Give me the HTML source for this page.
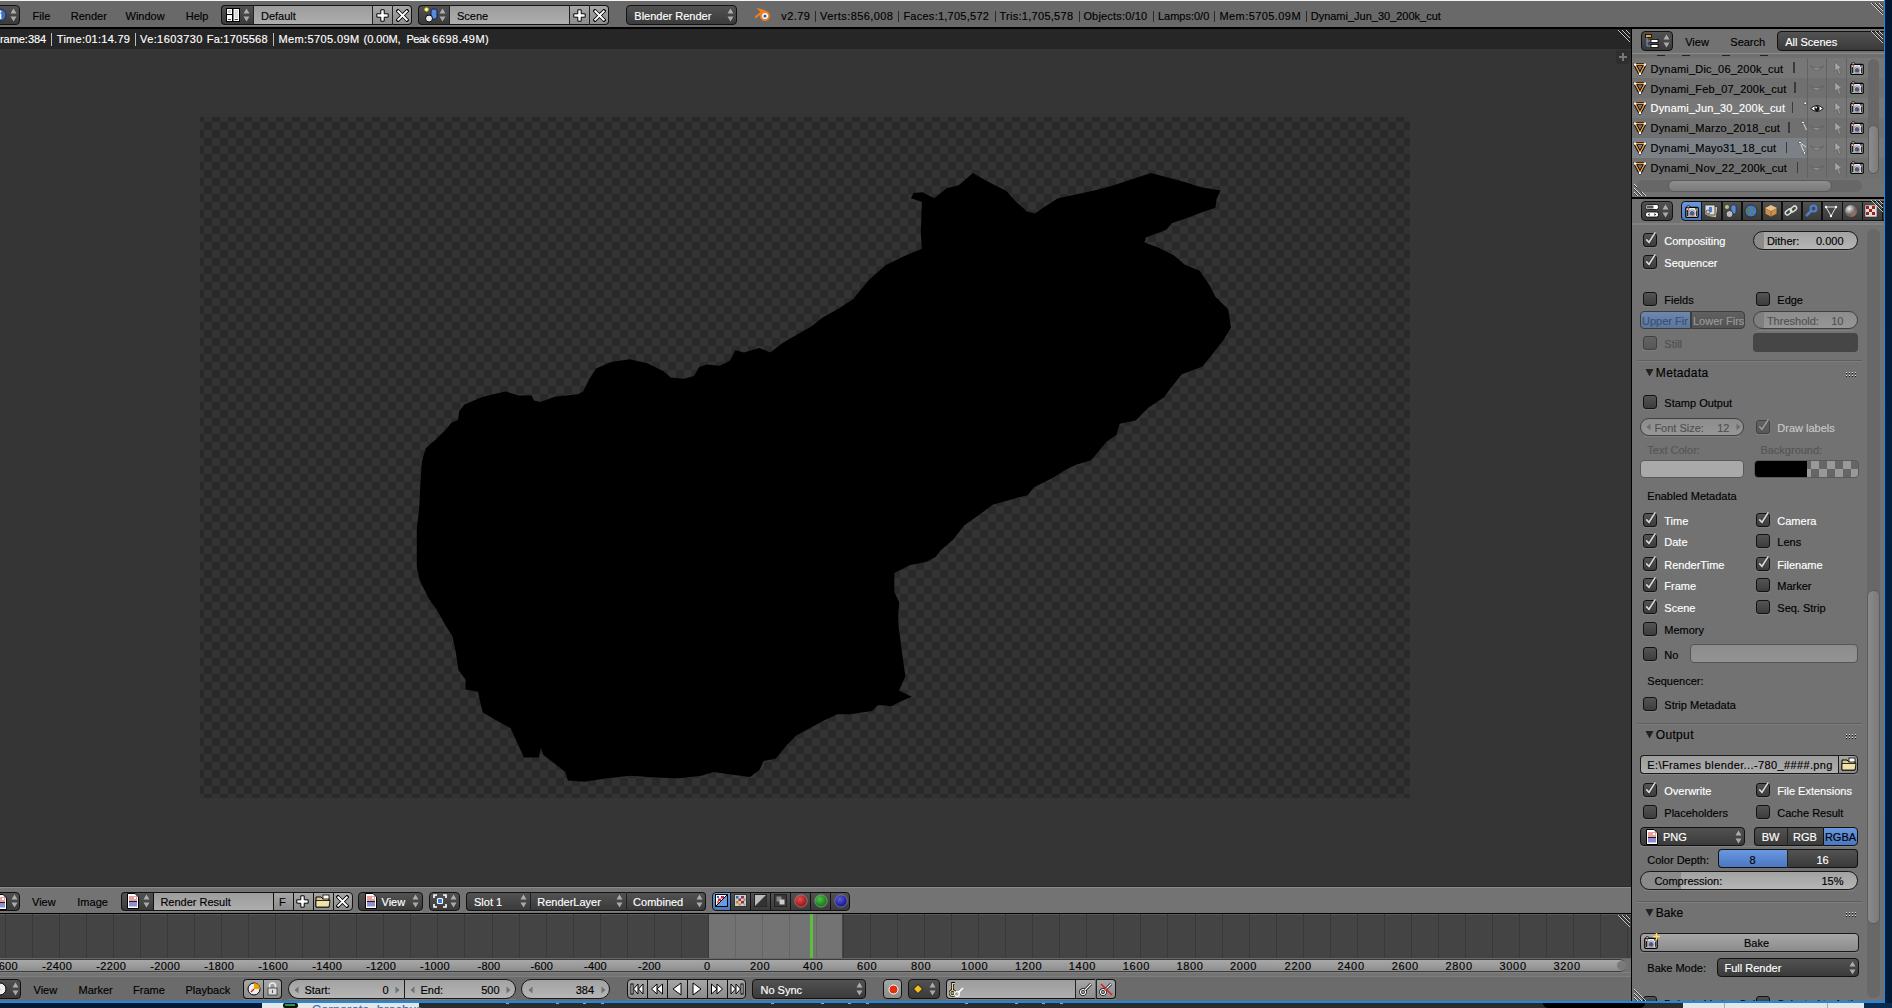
<!DOCTYPE html><html><head><meta charset="utf-8"><style>
html,body{margin:0;padding:0;width:1892px;height:1008px;overflow:hidden;background:#727272;}
body{position:relative;font-family:"Liberation Sans",sans-serif;}
div,span,svg{position:absolute;}
.t{white-space:pre;line-height:normal;-webkit-text-stroke:0.15px currentColor;}
</style></head><body>

<div style="left:0px;top:0px;width:1884px;height:27px;background:#696969"></div>
<div style="left:0px;top:0px;width:1892px;height:1px;background:#f4f4f4"></div>
<div style="left:0px;top:27px;width:1884px;height:1.5px;background:#000"></div>
<div style="left:0px;top:28.5px;width:1631px;height:0.5px;background:#3a3a3a"></div>
<svg style="left:1870px;top:1.5px" width="14" height="14" viewBox="0 0 14 14"><path d="M1 1 L13 13 M5 1 L13 9 M9 1 L13 5" stroke="#fff" stroke-width="1" opacity="0.75"/><path d="M2 1 L13 12 M6 1 L13 8 M10 1 L13 4" stroke="#000" stroke-width="1" opacity="0.55"/></svg>
<div style="left:-12px;top:5px;width:32px;height:20px;background:linear-gradient(#525252,#3a3a3a);border:1px solid #111;border-radius:4px;box-sizing:border-box;"></div>
<svg style="left:-6px;top:8px" width="14" height="14" viewBox="0 0 14 14"><circle cx="6" cy="7" r="6" fill="#3f6fb8" stroke="#1a2a50" stroke-width="1"/><rect x="4.7" y="5.5" width="2.6" height="5.5" fill="#fff"/><rect x="4.7" y="2.6" width="2.6" height="2" fill="#fff"/></svg>
<svg style="left:10px;top:8px" width="7" height="14" viewBox="0 0 7 14"><path d="M3.5 0.5 L6.5 5.5 L0.5 5.5Z M0.5 8.5 L6.5 8.5 L3.5 13.5Z" fill="rgba(255,255,255,0.55)"/></svg>
<span class="t" style="left:32.6px;top:10.04px;font-size:11px;color:#000;">File</span>
<span class="t" style="left:70.8px;top:10.04px;font-size:11px;color:#000;">Render</span>
<span class="t" style="left:125.5px;top:10.04px;font-size:11px;color:#000;">Window</span>
<span class="t" style="left:185.8px;top:10.04px;font-size:11px;color:#000;">Help</span>
<div style="left:221px;top:5px;width:32px;height:20px;background:linear-gradient(#525252,#3a3a3a);border:1px solid #111;border-right:none;border-radius:4px 0 0 4px;box-sizing:border-box"></div>
<svg style="left:226px;top:8px" width="14" height="14" viewBox="0 0 14 14"><rect x="0.5" y="0.5" width="6" height="6" fill="#fff" stroke="#000"/><rect x="0.5" y="6.5" width="6" height="7" fill="#fff" stroke="#000"/><rect x="7" y="0.5" width="6.5" height="13" fill="#fff" stroke="#000"/><rect x="2" y="2" width="3" height="3" fill="#ccc"/><rect x="8.5" y="2" width="3.5" height="8" fill="#ddd"/><rect x="2" y="11" width="3" height="1" fill="#444"/><rect x="8.5" y="11" width="3.5" height="1" fill="#444"/></svg>
<svg style="left:243px;top:8px" width="7" height="14" viewBox="0 0 7 14"><path d="M3.5 0.5 L6.5 5.5 L0.5 5.5Z M0.5 8.5 L6.5 8.5 L3.5 13.5Z" fill="rgba(255,255,255,0.55)"/></svg>
<div style="left:253px;top:5px;width:119px;height:20px;background:linear-gradient(#9c9c9c,#aeaeae);border:1px solid #111;border-left:1px solid #222;border-right:none;box-sizing:border-box"></div>
<span class="t" style="left:261px;top:9.54px;font-size:11px;color:#000;">Default</span>
<div style="left:372px;top:5px;width:20px;height:20px;background:linear-gradient(#a6a6a6,#8c8c8c);border:1px solid #111;border-left:1px solid #222;border-right:none;box-sizing:border-box"></div>
<svg style="left:375.5px;top:8.5px" width="13" height="13" viewBox="0 0 13 13"><path d="M4.8 0.8h3.4v4h4v3.4h-4v4h-3.4v-4h-4v-3.4h4z" fill="#fff" stroke="#000" stroke-width="1"/></svg>
<div style="left:392px;top:5px;width:20px;height:20px;background:linear-gradient(#a6a6a6,#8c8c8c);border:1px solid #111;border-left:1px solid #222;border-radius:0 4px 4px 0;box-sizing:border-box"></div>
<svg style="left:395.5px;top:8.5px" width="13" height="13" viewBox="0 0 13 13"><path d="M2 2 L11 11 M11 2 L2 11" stroke="#000" stroke-width="3.6" stroke-linecap="square"/><path d="M2.3 2.3 L10.7 10.7 M10.7 2.3 L2.3 10.7" stroke="#fff" stroke-width="2" stroke-linecap="square"/></svg>
<div style="left:221px;top:25px;width:191px;height:1px;background:rgba(255,255,255,0.12)"></div>
<div style="left:418px;top:5px;width:31px;height:20px;background:linear-gradient(#525252,#3a3a3a);border:1px solid #111;border-right:none;border-radius:4px 0 0 4px;box-sizing:border-box"></div>
<svg style="left:424px;top:7px" width="16" height="16" viewBox="0 0 16 16"><circle cx="2.5" cy="2.5" r="2" fill="#ffffa0" stroke="#a0a020" stroke-width="0.8"/><rect x="7" y="2" width="6" height="10" rx="2" fill="#5a8ad8" stroke="#10205a" stroke-width="1"/><circle cx="5" cy="11.5" r="3.5" fill="#e8e8e8" stroke="#000" stroke-width="1"/></svg>
<svg style="left:439px;top:8px" width="7" height="14" viewBox="0 0 7 14"><path d="M3.5 0.5 L6.5 5.5 L0.5 5.5Z M0.5 8.5 L6.5 8.5 L3.5 13.5Z" fill="rgba(255,255,255,0.55)"/></svg>
<div style="left:449px;top:5px;width:120px;height:20px;background:linear-gradient(#9c9c9c,#aeaeae);border:1px solid #111;border-left:1px solid #222;border-right:none;box-sizing:border-box"></div>
<span class="t" style="left:457px;top:9.54px;font-size:11px;color:#000;">Scene</span>
<div style="left:569px;top:5px;width:20px;height:20px;background:linear-gradient(#a6a6a6,#8c8c8c);border:1px solid #111;border-left:1px solid #222;border-right:none;box-sizing:border-box"></div>
<svg style="left:572.5px;top:8.5px" width="13" height="13" viewBox="0 0 13 13"><path d="M4.8 0.8h3.4v4h4v3.4h-4v4h-3.4v-4h-4v-3.4h4z" fill="#fff" stroke="#000" stroke-width="1"/></svg>
<div style="left:589px;top:5px;width:20px;height:20px;background:linear-gradient(#a6a6a6,#8c8c8c);border:1px solid #111;border-left:1px solid #222;border-radius:0 4px 4px 0;box-sizing:border-box"></div>
<svg style="left:592.5px;top:8.5px" width="13" height="13" viewBox="0 0 13 13"><path d="M2 2 L11 11 M11 2 L2 11" stroke="#000" stroke-width="3.6" stroke-linecap="square"/><path d="M2.3 2.3 L10.7 10.7 M10.7 2.3 L2.3 10.7" stroke="#fff" stroke-width="2" stroke-linecap="square"/></svg>
<div style="left:418px;top:25px;width:191px;height:1px;background:rgba(255,255,255,0.12)"></div>
<div style="left:626px;top:5px;width:111px;height:20px;background:linear-gradient(#525252,#3a3a3a);border:1px solid #111;border-radius:4px;box-sizing:border-box;"></div>
<span class="t" style="left:634.3px;top:9.54px;font-size:11px;color:#fff;">Blender Render</span>
<svg style="left:727px;top:8px" width="7" height="14" viewBox="0 0 7 14"><path d="M3.5 0.5 L6.5 5.5 L0.5 5.5Z M0.5 8.5 L6.5 8.5 L3.5 13.5Z" fill="rgba(255,255,255,0.55)"/></svg>
<svg style="left:755px;top:8px" width="16" height="14" viewBox="0 0 16 14"><path d="M1 9 L7 4 L5 2 L9 3 L12 5" stroke="#f08020" stroke-width="2.2" fill="none" stroke-linecap="round"/><circle cx="10" cy="8" r="5" fill="#f08020"/><circle cx="10" cy="8" r="3" fill="#fff"/><circle cx="10" cy="8" r="1.6" fill="#2060c0"/></svg>
<span class="t" style="left:781.2px;top:10.04px;font-size:11px;color:#000;letter-spacing:0.456px;">v2.79</span>
<span class="t" style="left:820.1px;top:10.04px;font-size:11px;color:#000;letter-spacing:0.408px;">Verts:856,008</span>
<span class="t" style="left:903.4px;top:10.04px;font-size:11px;color:#000;letter-spacing:0.256px;">Faces:1,705,572</span>
<span class="t" style="left:999.5px;top:10.04px;font-size:11px;color:#000;letter-spacing:0.277px;">Tris:1,705,578</span>
<span class="t" style="left:1083.4px;top:10.04px;font-size:11px;color:#000;letter-spacing:0.178px;">Objects:0/10</span>
<span class="t" style="left:1157.9px;top:10.04px;font-size:11px;color:#000;letter-spacing:0.003px;">Lamps:0/0</span>
<span class="t" style="left:1219.5px;top:10.04px;font-size:11px;color:#000;letter-spacing:0.422px;">Mem:5705.09M</span>
<span class="t" style="left:1310.7px;top:10.04px;font-size:11px;color:#000;letter-spacing:-0.003px;">Dynami_Jun_30_200k_cut</span>
<div style="left:815.4px;top:11px;width:1px;height:11px;background:#2a2a2a"></div>
<div style="left:898.4px;top:11px;width:1px;height:11px;background:#2a2a2a"></div>
<div style="left:994.5px;top:11px;width:1px;height:11px;background:#2a2a2a"></div>
<div style="left:1078.6px;top:11px;width:1px;height:11px;background:#2a2a2a"></div>
<div style="left:1152.8px;top:11px;width:1px;height:11px;background:#2a2a2a"></div>
<div style="left:1214.4px;top:11px;width:1px;height:11px;background:#2a2a2a"></div>
<div style="left:1305.6px;top:11px;width:1px;height:11px;background:#2a2a2a"></div>
<div style="left:0px;top:29px;width:1630.5px;height:858px;background:#353535"></div>
<div style="left:0px;top:29px;width:1631px;height:20px;background:#262626"></div>
<div style="left:200px;top:117px;width:1210px;height:681px;background:repeating-conic-gradient(#333333 0% 25%, #292929 0% 50%) 4px 5px/16px 16px"></div>
<svg style="left:0;top:0" width="1892" height="1008" viewBox="0 0 1892 1008"><path d="M911.0 198.2 L913.5 193.0 L922.6 192.3 L934.2 198.2 L947.0 187.9 L958.7 185.3 L972.9 172.9 L985.8 180.6 L1006.4 191.0 L1014.2 200.0 L1027.0 211.6 L1034.8 213.4 L1045.1 206.4 L1058.0 198.2 L1094.2 190.4 L1112.2 185.8 L1150.9 172.9 L1184.5 181.9 L1200.0 187.1 L1220.6 190.4 L1216.7 198.7 L1215.4 207.7 L1200.0 212.9 L1187.0 218.0 L1171.6 223.2 L1166.4 229.7 L1145.8 237.4 L1144.5 242.6 L1158.7 247.7 L1174.1 255.5 L1184.5 264.5 L1200.0 271.0 L1210.3 286.4 L1215.4 296.8 L1228.3 309.6 L1230.9 327.7 L1223.2 340.6 L1212.8 353.5 L1202.5 366.4 L1181.9 374.2 L1171.6 387.1 L1163.8 397.4 L1148.3 407.7 L1145.0 411.1 L1135.6 420.6 L1119.7 423.8 L1116.5 434.9 L1107.0 441.3 L1091.1 460.3 L1075.2 465.1 L1065.7 469.8 L1053.0 477.8 L1034.0 487.3 L1027.6 495.2 L1014.9 498.4 L992.7 504.8 L980.0 514.3 L964.1 525.4 L953.0 539.7 L940.3 550.8 L935.6 557.1 L926.0 561.9 L910.2 565.1 L894.3 573.0 L894.3 592.1 L899.0 601.6 L898.1 622.2 L902.2 654.0 L905.4 676.2 L899.0 690.5 L911.7 696.8 L900.6 701.6 L891.1 706.3 L878.4 704.8 L872.1 711.1 L849.8 714.3 L837.1 714.3 L823.0 721.0 L796.3 735.6 L786.6 745.3 L775.6 758.7 L763.5 761.1 L759.8 769.6 L750.1 777.0 L730.7 774.5 L713.6 772.1 L701.5 775.7 L679.6 778.2 L655.3 777.4 L631.0 775.7 L606.7 778.2 L584.8 781.8 L567.8 780.6 L565.3 772.1 L553.2 762.4 L543.4 755.0 L541.0 747.8 L538.6 757.5 L524.0 757.5 L510.6 728.3 L502.1 723.4 L482.7 712.5 L477.8 691.8 L465.6 689.4 L465.6 679.7 L458.4 670.0 L455.9 653.0 L452.3 635.9 L447.4 628.6 L436.5 609.2 L429.2 599.5 L419.5 580.0 L416.8 566.9 L416.8 528.2 L419.3 507.6 L420.6 479.2 L421.9 461.2 L425.8 448.3 L437.4 438.0 L446.4 429.0 L451.6 422.5 L458.0 420.0 L459.3 410.9 L464.5 404.5 L479.9 398.0 L487.7 395.4 L505.7 391.6 L518.6 395.4 L531.5 395.4 L534.1 400.6 L540.5 401.9 L554.7 396.7 L577.9 394.2 L583.1 391.6 L589.5 378.7 L596.0 368.4 L611.4 361.9 L629.5 359.3 L647.5 363.2 L663.0 370.9 L670.8 377.4 L683.7 378.7 L694.0 376.1 L699.1 367.1 L706.9 364.5 L719.8 365.8 L730.1 360.6 L735.3 350.2 L744.0 352.4 L759.3 348.0 L770.2 352.4 L783.3 342.6 L796.4 335.0 L811.7 326.2 L822.6 317.5 L840.1 307.7 L853.2 298.9 L868.4 280.4 L885.9 265.1 L903.4 256.4 L921.9 248.7 L920.8 232.4 L921.9 201.8Z" fill="#000"/></svg>
<span class="t" style="left:-6.8px;top:33.05px;font-size:11px;color:#fff;letter-spacing:-0.023px;">Frame:384</span>
<span class="t" style="left:56.8px;top:33.05px;font-size:11px;color:#fff;letter-spacing:0.268px;">Time:01:14.79</span>
<span class="t" style="left:140px;top:33.05px;font-size:11px;color:#fff;letter-spacing:0.407px;">Ve:1603730</span>
<span class="t" style="left:206.8px;top:33.05px;font-size:11px;color:#fff;letter-spacing:0.228px;">Fa:1705568</span>
<span class="t" style="left:278.4px;top:33.05px;font-size:11px;color:#fff;letter-spacing:0.405px;">Mem:5705.09M</span>
<span class="t" style="left:363.6px;top:33.05px;font-size:11px;color:#fff;letter-spacing:-0.042px;">(0.00M,</span>
<span class="t" style="left:406.6px;top:33.05px;font-size:11px;color:#fff;letter-spacing:-0.670px;">Peak</span>
<span class="t" style="left:432.3px;top:33.05px;font-size:11px;color:#fff;letter-spacing:0.478px;">6698.49M)</span>
<div style="left:51px;top:33px;width:1px;height:13px;background:#bbb"></div>
<div style="left:135px;top:33px;width:1px;height:13px;background:#bbb"></div>
<div style="left:273px;top:33px;width:1px;height:13px;background:#bbb"></div>
<svg style="left:1617px;top:29px" width="14" height="14" viewBox="0 0 14 14"><path d="M1 1 L13 13 M5 1 L13 9 M9 1 L13 5" stroke="#fff" stroke-width="1" opacity="0.75"/><path d="M2 1 L13 12 M6 1 L13 8 M10 1 L13 4" stroke="#000" stroke-width="1" opacity="0.55"/></svg>
<div style="left:1616px;top:50px;width:14px;height:14px;background:#2e2e2e;border-radius:3px"></div>
<svg style="left:1618px;top:52px" width="10" height="10" viewBox="0 0 10 10"><path d="M4 1h2v3h3v2h-3v3h-2v-3h-3v-2h3z" fill="#777"/></svg>
<div style="left:0px;top:886px;width:1631px;height:1px;background:#2a2a2a"></div>
<div style="left:0px;top:887px;width:1631px;height:26px;background:#737373"></div>
<div style="left:0px;top:887px;width:1631px;height:1px;background:#8c8c8c"></div>
<div style="left:0px;top:913px;width:1631px;height:1px;background:#000"></div>
<div style="left:-12px;top:891.5px;width:32px;height:19px;background:linear-gradient(#525252,#3a3a3a);border:1px solid #111;border-radius:4px;box-sizing:border-box;"></div>
<svg style="left:-6px;top:893.5px" width="14" height="16" viewBox="0 0 14 16"><path d="M1.5 0.5 H9 L12.5 4 V15.5 H1.5Z" fill="#fff" stroke="#000" stroke-width="1"/><rect x="3" y="3" width="8" height="5" fill="#e8a0a0"/><rect x="3" y="8" width="8" height="1.5" fill="#222"/><rect x="3" y="9.5" width="8" height="4" fill="#8f8fd8"/><rect x="8" y="4" width="2" height="2" fill="#fff"/></svg>
<svg style="left:11px;top:894.0px" width="7" height="14" viewBox="0 0 7 14"><path d="M3.5 0.5 L6.5 5.5 L0.5 5.5Z M0.5 8.5 L6.5 8.5 L3.5 13.5Z" fill="rgba(255,255,255,0.55)"/></svg>
<span class="t" style="left:32px;top:896.04px;font-size:11px;color:#000;">View</span>
<span class="t" style="left:77.3px;top:896.04px;font-size:11px;color:#000;">Image</span>
<div style="left:121.4px;top:891.5px;width:31.4px;height:19px;background:linear-gradient(#525252,#3a3a3a);border:1px solid #111;border-radius:4px 0 0 4px;box-sizing:border-box;border-right:none"></div>
<svg style="left:126px;top:893.0px" width="14" height="16" viewBox="0 0 14 16"><path d="M1.5 0.5 H9 L12.5 4 V15.5 H1.5Z" fill="#fff" stroke="#000" stroke-width="1"/><rect x="3" y="3" width="8" height="5" fill="#e8a0a0"/><rect x="3" y="8" width="8" height="1.5" fill="#222"/><rect x="3" y="9.5" width="8" height="4" fill="#8f8fd8"/><rect x="8" y="4" width="2" height="2" fill="#fff"/></svg>
<svg style="left:143px;top:894.0px" width="7" height="14" viewBox="0 0 7 14"><path d="M3.5 0.5 L6.5 5.5 L0.5 5.5Z M0.5 8.5 L6.5 8.5 L3.5 13.5Z" fill="rgba(255,255,255,0.55)"/></svg>
<div style="left:152.8px;top:891.5px;width:120px;height:19px;background:linear-gradient(#9c9c9c,#aeaeae);border:1px solid #111;border-radius:0;box-sizing:border-box;border-right:none"></div>
<span class="t" style="left:160.4px;top:896.04px;font-size:11px;color:#000;">Render Result</span>
<div style="left:272.7px;top:891.5px;width:20px;height:19px;background:linear-gradient(#a6a6a6,#8c8c8c);border:1px solid #111;border-radius:0;box-sizing:border-box;border-right:none"></div>
<span class="t" style="left:279px;top:896.04px;font-size:11px;color:#000;">F</span>
<div style="left:292.6px;top:891.5px;width:20px;height:19px;background:linear-gradient(#a6a6a6,#8c8c8c);border:1px solid #111;border-radius:0;box-sizing:border-box;border-right:none"></div>
<svg style="left:296px;top:894.5px" width="13" height="13" viewBox="0 0 13 13"><path d="M4.8 0.8h3.4v4h4v3.4h-4v4h-3.4v-4h-4v-3.4h4z" fill="#fff" stroke="#000" stroke-width="1"/></svg>
<div style="left:312.6px;top:891.5px;width:20px;height:19px;background:linear-gradient(#a6a6a6,#8c8c8c);border:1px solid #111;border-radius:0;box-sizing:border-box;border-right:none"></div>
<svg style="left:314.5px;top:894.0px" width="16" height="14" viewBox="0 0 16 14"><path d="M1 3 H6 L7.5 4.5 H14 V13 H1Z" fill="#d8c88a" stroke="#000" stroke-width="1"/><rect x="8" y="1" width="6" height="4" fill="#fff" stroke="#000" stroke-width="0.8"/><path d="M1 6.5 H15 L14 13 H1Z" fill="#efe2a8" stroke="#000" stroke-width="0.8"/></svg>
<div style="left:332.6px;top:891.5px;width:20px;height:19px;background:linear-gradient(#a6a6a6,#8c8c8c);border:1px solid #111;border-radius:0 4px 4px 0;box-sizing:border-box;"></div>
<svg style="left:336px;top:894.5px" width="13" height="13" viewBox="0 0 13 13"><path d="M2 2 L11 11 M11 2 L2 11" stroke="#000" stroke-width="3.6" stroke-linecap="square"/><path d="M2.3 2.3 L10.7 10.7 M10.7 2.3 L2.3 10.7" stroke="#fff" stroke-width="2" stroke-linecap="square"/></svg>
<div style="left:121.4px;top:910.5px;width:231.2px;height:1px;background:rgba(255,255,255,0.10)"></div>
<div style="left:358.3px;top:891.5px;width:65.2px;height:19px;background:linear-gradient(#525252,#3a3a3a);border:1px solid #111;border-radius:4px;box-sizing:border-box;"></div>
<svg style="left:364px;top:893.0px" width="14" height="16" viewBox="0 0 14 16"><path d="M1.5 0.5 H9 L12.5 4 V15.5 H1.5Z" fill="#fff" stroke="#000" stroke-width="1"/><rect x="3" y="3" width="8" height="5" fill="#e8a0a0"/><rect x="3" y="8" width="8" height="1.5" fill="#222"/><rect x="3" y="9.5" width="8" height="4" fill="#8f8fd8"/><rect x="8" y="4" width="2" height="2" fill="#fff"/></svg>
<span class="t" style="left:381.5px;top:896.04px;font-size:11px;color:#fff;">View</span>
<svg style="left:412px;top:894.0px" width="7" height="14" viewBox="0 0 7 14"><path d="M3.5 0.5 L6.5 5.5 L0.5 5.5Z M0.5 8.5 L6.5 8.5 L3.5 13.5Z" fill="rgba(255,255,255,0.55)"/></svg>
<div style="left:358.3px;top:910.5px;width:65.2px;height:1px;background:rgba(255,255,255,0.10)"></div>
<div style="left:429.3px;top:891.5px;width:31.2px;height:19px;background:linear-gradient(#525252,#3a3a3a);border:1px solid #111;border-radius:4px;box-sizing:border-box;"></div>
<svg style="left:433px;top:894.0px" width="14" height="14" viewBox="0 0 14 14"><path d="M1 4V1H4 M10 1H13V4 M13 10V13H10 M4 13H1V10" stroke="#fff" stroke-width="1.6" fill="none"/><rect x="4.5" y="4.5" width="5" height="5" rx="1" fill="#3070e0" stroke="#fff" stroke-width="1.2"/></svg>
<svg style="left:450px;top:894.0px" width="7" height="14" viewBox="0 0 7 14"><path d="M3.5 0.5 L6.5 5.5 L0.5 5.5Z M0.5 8.5 L6.5 8.5 L3.5 13.5Z" fill="rgba(255,255,255,0.55)"/></svg>
<div style="left:429.3px;top:910.5px;width:31.2px;height:1px;background:rgba(255,255,255,0.10)"></div>
<div style="left:465.8px;top:891.5px;width:64px;height:19px;background:linear-gradient(#525252,#3a3a3a);border:1px solid #111;border-radius:4px 0 0 4px;box-sizing:border-box;border-right:none"></div>
<span class="t" style="left:474px;top:896.04px;font-size:11px;color:#fff;">Slot 1</span>
<svg style="left:520px;top:894.0px" width="7" height="14" viewBox="0 0 7 14"><path d="M3.5 0.5 L6.5 5.5 L0.5 5.5Z M0.5 8.5 L6.5 8.5 L3.5 13.5Z" fill="rgba(255,255,255,0.55)"/></svg>
<div style="left:529.8px;top:891.5px;width:96px;height:19px;background:linear-gradient(#525252,#3a3a3a);border:1px solid #111;border-radius:0;box-sizing:border-box;border-right:none;border-left:1px solid #222"></div>
<span class="t" style="left:537.3px;top:896.04px;font-size:11px;color:#fff;">RenderLayer</span>
<svg style="left:616px;top:894.0px" width="7" height="14" viewBox="0 0 7 14"><path d="M3.5 0.5 L6.5 5.5 L0.5 5.5Z M0.5 8.5 L6.5 8.5 L3.5 13.5Z" fill="rgba(255,255,255,0.55)"/></svg>
<div style="left:625.7px;top:891.5px;width:80.2px;height:19px;background:linear-gradient(#525252,#3a3a3a);border:1px solid #111;border-radius:0 4px 4px 0;box-sizing:border-box;border-left:1px solid #222"></div>
<span class="t" style="left:633.1px;top:896.04px;font-size:11px;color:#fff;">Combined</span>
<svg style="left:696px;top:894.0px" width="7" height="14" viewBox="0 0 7 14"><path d="M3.5 0.5 L6.5 5.5 L0.5 5.5Z M0.5 8.5 L6.5 8.5 L3.5 13.5Z" fill="rgba(255,255,255,0.55)"/></svg>
<div style="left:465.8px;top:910.5px;width:240.1px;height:1px;background:rgba(255,255,255,0.10)"></div>
<div style="left:711.8px;top:891.5px;width:19.600000000000023px;height:19px;background:linear-gradient(#6a98e0,#4a78c0);border:1px solid #111;border-radius:4px 0 0 4px;box-sizing:border-box;"></div>
<div style="left:730.4px;top:891.5px;width:20.899999999999977px;height:19px;background:linear-gradient(#525252,#3a3a3a);border:1px solid #111;border-radius:0;box-sizing:border-box;"></div>
<div style="left:750.3px;top:891.5px;width:20.90000000000009px;height:19px;background:linear-gradient(#525252,#3a3a3a);border:1px solid #111;border-radius:0;box-sizing:border-box;"></div>
<div style="left:770.2px;top:891.5px;width:20.899999999999977px;height:19px;background:linear-gradient(#525252,#3a3a3a);border:1px solid #111;border-radius:0;box-sizing:border-box;"></div>
<div style="left:790.1px;top:891.5px;width:21.299999999999955px;height:19px;background:linear-gradient(#525252,#3a3a3a);border:1px solid #111;border-radius:0;box-sizing:border-box;"></div>
<div style="left:810.4px;top:891.5px;width:20.800000000000068px;height:19px;background:linear-gradient(#525252,#3a3a3a);border:1px solid #111;border-radius:0;box-sizing:border-box;"></div>
<div style="left:830.2px;top:891.5px;width:20.299999999999955px;height:19px;background:linear-gradient(#525252,#3a3a3a);border:1px solid #111;border-radius:0 4px 4px 0;box-sizing:border-box;"></div>
<div style="left:711.8px;top:910.5px;width:138.7px;height:1px;background:rgba(255,255,255,0.10)"></div>
<svg style="left:715px;top:894.0px" width="13" height="13" viewBox="0 0 13 13"><rect x="0.5" y="0.5" width="12" height="12" fill="#fff" stroke="#000"/><rect x="6" y="2" width="3" height="2.5" fill="#d02040"/><rect x="3" y="4.5" width="3" height="2.5" fill="#d02040"/><rect x="2" y="2" width="2" height="2" fill="#2070b0"/><rect x="2" y="7" width="2" height="2.5" fill="#e08020"/><path d="M12.5 0.5 L0.5 12.5 L12.5 12.5Z" fill="#6a9ae0" stroke="#000"/></svg>
<svg style="left:734px;top:894.0px" width="13" height="13" viewBox="0 0 13 13"><rect x="0.5" y="0.5" width="12" height="12" fill="#ccc" stroke="#333"/><rect x="2" y="2" width="2.5" height="2.5" fill="#2070a0"/><rect x="7" y="2" width="3" height="2.5" fill="#a03040"/><rect x="4.5" y="4.5" width="2.5" height="2.5" fill="#a03040"/><rect x="2" y="7" width="2.5" height="2.5" fill="#d08020"/><rect x="7" y="7" width="3" height="2.5" fill="#a03040"/><rect x="9.5" y="4.5" width="2" height="2.5" fill="#70a090"/><rect x="4.5" y="9.5" width="2.5" height="2" fill="#b09070"/><rect x="9.5" y="9.5" width="2" height="2" fill="#a0b060"/></svg>
<svg style="left:753.5px;top:894.0px" width="13" height="13" viewBox="0 0 13 13"><rect x="0.5" y="0.5" width="12" height="12" fill="#bbb" stroke="#222"/><path d="M12.5 0.5 L0.5 12.5 L12.5 12.5Z" fill="#333"/></svg>
<svg style="left:773.5px;top:894.0px" width="13" height="13" viewBox="0 0 13 13"><rect x="0.5" y="0.5" width="12" height="12" fill="#3a3a3a" stroke="#222"/><rect x="2.5" y="2.5" width="5" height="5" fill="#888"/><rect x="5.5" y="5.5" width="5" height="5" fill="#ccc"/></svg>
<svg style="left:793.5px;top:894.0px" width="14" height="14" viewBox="0 0 14 14"><defs><radialGradient id="g0" cx="40%" cy="35%"><stop offset="0" stop-color="#e05050"/><stop offset="1" stop-color="#a02020"/></radialGradient></defs><circle cx="7" cy="7" r="6.2" fill="url(#g0)" stroke="rgba(255,255,255,0.35)" stroke-width="0.8"/></svg>
<svg style="left:813.7px;top:894.0px" width="14" height="14" viewBox="0 0 14 14"><defs><radialGradient id="g1" cx="40%" cy="35%"><stop offset="0" stop-color="#50c050"/><stop offset="1" stop-color="#208020"/></radialGradient></defs><circle cx="7" cy="7" r="6.2" fill="url(#g1)" stroke="rgba(255,255,255,0.35)" stroke-width="0.8"/></svg>
<svg style="left:833.5px;top:894.0px" width="14" height="14" viewBox="0 0 14 14"><defs><radialGradient id="g2" cx="40%" cy="35%"><stop offset="0" stop-color="#6060d0"/><stop offset="1" stop-color="#2020a0"/></radialGradient></defs><circle cx="7" cy="7" r="6.2" fill="url(#g2)" stroke="rgba(255,255,255,0.35)" stroke-width="0.8"/></svg>
<div style="left:0px;top:914px;width:1631px;height:1px;background:#5a5a5a"></div>
<div style="left:0px;top:915px;width:1631px;height:43px;background:#444444"></div>
<div style="left:707.9px;top:914px;width:134.4px;height:44px;background:#737373"></div>
<div style="left:4.8px;top:914px;width:1px;height:44px;background:#393939"></div>
<div style="left:31.8px;top:914px;width:1px;height:44px;background:#393939"></div>
<div style="left:58.9px;top:914px;width:1px;height:44px;background:#393939"></div>
<div style="left:85.9px;top:914px;width:1px;height:44px;background:#393939"></div>
<div style="left:113.0px;top:914px;width:1px;height:44px;background:#393939"></div>
<div style="left:140.0px;top:914px;width:1px;height:44px;background:#393939"></div>
<div style="left:167.0px;top:914px;width:1px;height:44px;background:#393939"></div>
<div style="left:194.1px;top:914px;width:1px;height:44px;background:#393939"></div>
<div style="left:221.1px;top:914px;width:1px;height:44px;background:#393939"></div>
<div style="left:248.1px;top:914px;width:1px;height:44px;background:#393939"></div>
<div style="left:275.2px;top:914px;width:1px;height:44px;background:#393939"></div>
<div style="left:302.2px;top:914px;width:1px;height:44px;background:#393939"></div>
<div style="left:329.3px;top:914px;width:1px;height:44px;background:#393939"></div>
<div style="left:356.3px;top:914px;width:1px;height:44px;background:#393939"></div>
<div style="left:383.3px;top:914px;width:1px;height:44px;background:#393939"></div>
<div style="left:410.4px;top:914px;width:1px;height:44px;background:#393939"></div>
<div style="left:437.4px;top:914px;width:1px;height:44px;background:#393939"></div>
<div style="left:464.4px;top:914px;width:1px;height:44px;background:#393939"></div>
<div style="left:491.5px;top:914px;width:1px;height:44px;background:#393939"></div>
<div style="left:518.5px;top:914px;width:1px;height:44px;background:#393939"></div>
<div style="left:545.6px;top:914px;width:1px;height:44px;background:#393939"></div>
<div style="left:572.6px;top:914px;width:1px;height:44px;background:#393939"></div>
<div style="left:599.6px;top:914px;width:1px;height:44px;background:#393939"></div>
<div style="left:626.7px;top:914px;width:1px;height:44px;background:#393939"></div>
<div style="left:653.7px;top:914px;width:1px;height:44px;background:#393939"></div>
<div style="left:680.8px;top:914px;width:1px;height:44px;background:#393939"></div>
<div style="left:707.8px;top:914px;width:1px;height:44px;background:#393939"></div>
<div style="left:734.8px;top:914px;width:1px;height:44px;background:#666666"></div>
<div style="left:761.9px;top:914px;width:1px;height:44px;background:#666666"></div>
<div style="left:788.9px;top:914px;width:1px;height:44px;background:#666666"></div>
<div style="left:815.9px;top:914px;width:1px;height:44px;background:#666666"></div>
<div style="left:843.0px;top:914px;width:1px;height:44px;background:#393939"></div>
<div style="left:870.0px;top:914px;width:1px;height:44px;background:#393939"></div>
<div style="left:897.1px;top:914px;width:1px;height:44px;background:#393939"></div>
<div style="left:924.1px;top:914px;width:1px;height:44px;background:#393939"></div>
<div style="left:951.1px;top:914px;width:1px;height:44px;background:#393939"></div>
<div style="left:978.2px;top:914px;width:1px;height:44px;background:#393939"></div>
<div style="left:1005.2px;top:914px;width:1px;height:44px;background:#393939"></div>
<div style="left:1032.2px;top:914px;width:1px;height:44px;background:#393939"></div>
<div style="left:1059.3px;top:914px;width:1px;height:44px;background:#393939"></div>
<div style="left:1086.3px;top:914px;width:1px;height:44px;background:#393939"></div>
<div style="left:1113.4px;top:914px;width:1px;height:44px;background:#393939"></div>
<div style="left:1140.4px;top:914px;width:1px;height:44px;background:#393939"></div>
<div style="left:1167.4px;top:914px;width:1px;height:44px;background:#393939"></div>
<div style="left:1194.5px;top:914px;width:1px;height:44px;background:#393939"></div>
<div style="left:1221.5px;top:914px;width:1px;height:44px;background:#393939"></div>
<div style="left:1248.5px;top:914px;width:1px;height:44px;background:#393939"></div>
<div style="left:1275.6px;top:914px;width:1px;height:44px;background:#393939"></div>
<div style="left:1302.6px;top:914px;width:1px;height:44px;background:#393939"></div>
<div style="left:1329.7px;top:914px;width:1px;height:44px;background:#393939"></div>
<div style="left:1356.7px;top:914px;width:1px;height:44px;background:#393939"></div>
<div style="left:1383.7px;top:914px;width:1px;height:44px;background:#393939"></div>
<div style="left:1410.8px;top:914px;width:1px;height:44px;background:#393939"></div>
<div style="left:1437.8px;top:914px;width:1px;height:44px;background:#393939"></div>
<div style="left:1464.9px;top:914px;width:1px;height:44px;background:#393939"></div>
<div style="left:1491.9px;top:914px;width:1px;height:44px;background:#393939"></div>
<div style="left:1518.9px;top:914px;width:1px;height:44px;background:#393939"></div>
<div style="left:1546.0px;top:914px;width:1px;height:44px;background:#393939"></div>
<div style="left:1573.0px;top:914px;width:1px;height:44px;background:#393939"></div>
<div style="left:1600.0px;top:914px;width:1px;height:44px;background:#393939"></div>
<div style="left:1627.1px;top:914px;width:1px;height:44px;background:#393939"></div>
<div style="left:810px;top:914px;width:3px;height:44px;background:#5bc03c"></div>
<svg style="left:1617px;top:914px" width="14" height="14" viewBox="0 0 14 14"><path d="M1 1 L13 13 M5 1 L13 9 M9 1 L13 5" stroke="#fff" stroke-width="1" opacity="0.75"/><path d="M2 1 L13 12 M6 1 L13 8 M10 1 L13 4" stroke="#000" stroke-width="1" opacity="0.5"/></svg>
<div style="left:0px;top:958px;width:1631px;height:1px;background:#666"></div>
<div style="left:0px;top:959px;width:1626px;height:13px;background:linear-gradient(#a8a8a8,#8e8e8e);border-top:1px solid #3c3c3c;border-bottom:1px solid #3c3c3c;border-radius:0 7px 7px 0;box-sizing:border-box"></div>
<div style="left:1617px;top:961px;width:9px;height:9px;background:#7a7a7a;border-radius:50%"></div>
<span class="t" style="left:-11.9px;top:959.84px;font-size:11px;color:#000;letter-spacing:0.372px;">-2600</span>
<span class="t" style="left:42.3px;top:959.84px;font-size:11px;color:#000;letter-spacing:0.372px;">-2400</span>
<span class="t" style="left:96.3px;top:959.84px;font-size:11px;color:#000;letter-spacing:0.372px;">-2200</span>
<span class="t" style="left:150.3px;top:959.84px;font-size:11px;color:#000;letter-spacing:0.372px;">-2000</span>
<span class="t" style="left:204.2px;top:959.84px;font-size:11px;color:#000;letter-spacing:0.372px;">-1800</span>
<span class="t" style="left:258.2px;top:959.84px;font-size:11px;color:#000;letter-spacing:0.372px;">-1600</span>
<span class="t" style="left:312.2px;top:959.84px;font-size:11px;color:#000;letter-spacing:0.372px;">-1400</span>
<span class="t" style="left:366.2px;top:959.84px;font-size:11px;color:#000;letter-spacing:0.372px;">-1200</span>
<span class="t" style="left:420.1px;top:959.84px;font-size:11px;color:#000;letter-spacing:0.372px;">-1000</span>
<span class="t" style="left:477.6px;top:959.84px;font-size:11px;color:#000;letter-spacing:0.192px;">-800</span>
<span class="t" style="left:530.4px;top:959.84px;font-size:11px;color:#000;letter-spacing:0.192px;">-600</span>
<span class="t" style="left:584.1px;top:959.84px;font-size:11px;color:#000;letter-spacing:0.192px;">-400</span>
<span class="t" style="left:638.1px;top:959.84px;font-size:11px;color:#000;letter-spacing:0.192px;">-200</span>
<span class="t" style="left:704px;top:959.84px;font-size:11px;color:#000;letter-spacing:0.275px;">0</span>
<span class="t" style="left:750px;top:959.84px;font-size:11px;color:#000;letter-spacing:0.647px;">200</span>
<span class="t" style="left:803px;top:959.84px;font-size:11px;color:#000;letter-spacing:0.647px;">400</span>
<span class="t" style="left:857px;top:959.84px;font-size:11px;color:#000;letter-spacing:0.647px;">600</span>
<span class="t" style="left:911.1px;top:959.84px;font-size:11px;color:#000;letter-spacing:0.647px;">800</span>
<span class="t" style="left:961.1px;top:959.84px;font-size:11px;color:#000;letter-spacing:0.679px;">1000</span>
<span class="t" style="left:1015.1px;top:959.84px;font-size:11px;color:#000;letter-spacing:0.679px;">1200</span>
<span class="t" style="left:1068.8px;top:959.84px;font-size:11px;color:#000;letter-spacing:0.679px;">1400</span>
<span class="t" style="left:1122.8px;top:959.84px;font-size:11px;color:#000;letter-spacing:0.679px;">1600</span>
<span class="t" style="left:1176.4px;top:959.84px;font-size:11px;color:#000;letter-spacing:0.679px;">1800</span>
<span class="t" style="left:1229.9px;top:959.84px;font-size:11px;color:#000;letter-spacing:0.679px;">2000</span>
<span class="t" style="left:1284.6px;top:959.84px;font-size:11px;color:#000;letter-spacing:0.679px;">2200</span>
<span class="t" style="left:1337.5px;top:959.84px;font-size:11px;color:#000;letter-spacing:0.679px;">2400</span>
<span class="t" style="left:1391.7px;top:959.84px;font-size:11px;color:#000;letter-spacing:0.679px;">2600</span>
<span class="t" style="left:1445.5px;top:959.84px;font-size:11px;color:#000;letter-spacing:0.679px;">2800</span>
<span class="t" style="left:1499.5px;top:959.84px;font-size:11px;color:#000;letter-spacing:0.679px;">3000</span>
<span class="t" style="left:1553.5px;top:959.84px;font-size:11px;color:#000;letter-spacing:0.679px;">3200</span>
<div style="left:0px;top:972px;width:1631px;height:1px;background:#808080"></div>
<div style="left:0px;top:973px;width:1631px;height:3px;background:#737373"></div>
<div style="left:0px;top:975.6px;width:1631px;height:1px;background:#7e7e7e"></div>
<div style="left:0px;top:976.6px;width:1631px;height:24.4px;background:#6b6b6b"></div>
<div style="left:-12px;top:979.2px;width:32.5px;height:19.4px;background:linear-gradient(#525252,#3a3a3a);border:1px solid #111;border-radius:4px;box-sizing:border-box;"></div>
<svg style="left:-7px;top:981.7px" width="14" height="14" viewBox="0 0 14 14"><circle cx="7" cy="7" r="6" fill="#eee" stroke="#000"/><path d="M7 7 L3 10" stroke="#d02020" stroke-width="1.5"/></svg>
<svg style="left:11.6px;top:981.7px" width="7" height="14" viewBox="0 0 7 14"><path d="M3.5 0.5 L6.5 5.5 L0.5 5.5Z M0.5 8.5 L6.5 8.5 L3.5 13.5Z" fill="rgba(255,255,255,0.55)"/></svg>
<span class="t" style="left:33.5px;top:983.54px;font-size:11px;color:#000;">View</span>
<span class="t" style="left:78.5px;top:983.54px;font-size:11px;color:#000;">Marker</span>
<span class="t" style="left:133px;top:983.54px;font-size:11px;color:#000;">Frame</span>
<span class="t" style="left:185.5px;top:983.54px;font-size:11px;color:#000;">Playback</span>
<div style="left:243.4px;top:979.2px;width:20px;height:19.4px;background:linear-gradient(#a6a6a6,#8c8c8c);border:1px solid #111;border-radius:4px 0 0 4px;box-sizing:border-box;border-right:none"></div>
<div style="left:262.9px;top:979.2px;width:19.5px;height:19.4px;background:linear-gradient(#a6a6a6,#8c8c8c);border:1px solid #111;border-radius:0 4px 4px 0;box-sizing:border-box;border-left:1px solid #222"></div>
<svg style="left:246.5px;top:981.7px" width="14" height="14" viewBox="0 0 14 14"><circle cx="7" cy="7" r="6" fill="#eee" stroke="#000"/><path d="M7 1 A6 6 0 0 1 13 7 L7 7Z" fill="#f0a000"/><path d="M7 7 L4 10" stroke="#c02020" stroke-width="1.2"/></svg>
<svg style="left:266px;top:981.7px" width="13" height="14" viewBox="0 0 13 14"><path d="M3.5 6V4A3 3 0 0 1 9.5 4V6" stroke="#eee" stroke-width="1.6" fill="none"/><rect x="2" y="6" width="9" height="7" fill="#ddd" stroke="#333" stroke-width="0.8"/><rect x="6" y="8" width="1" height="3" fill="#555"/></svg>
<div style="left:243.4px;top:998.6px;width:39px;height:1px;background:rgba(255,255,255,0.1)"></div>
<div style="left:288.1px;top:979.2px;width:116.3px;height:19.4px;background:linear-gradient(#a2a2a2,#b6b6b6);border:1px solid #191919;border-right:none;border-radius:10px 0 0 10px;box-sizing:border-box"></div>
<div style="left:404.4px;top:979.2px;width:111.2px;height:19.4px;background:linear-gradient(#a2a2a2,#b6b6b6);border:1px solid #191919;border-radius:0 10px 10px 0;box-sizing:border-box"></div>
<svg style="left:294px;top:985.5px" width="5" height="8" viewBox="0 0 5 8"><path d="M4.5 0.5 L0.5 4 L4.5 7.5Z" fill="rgba(0,0,0,0.35)"/></svg>
<svg style="left:395px;top:985.5px" width="5" height="8" viewBox="0 0 5 8"><path d="M0.5 0.5 L4.5 4 L0.5 7.5Z" fill="rgba(0,0,0,0.35)"/></svg>
<svg style="left:410px;top:985.5px" width="5" height="8" viewBox="0 0 5 8"><path d="M4.5 0.5 L0.5 4 L4.5 7.5Z" fill="rgba(0,0,0,0.35)"/></svg>
<svg style="left:506px;top:985.5px" width="5" height="8" viewBox="0 0 5 8"><path d="M0.5 0.5 L4.5 4 L0.5 7.5Z" fill="rgba(0,0,0,0.35)"/></svg>
<span class="t" style="left:304.4px;top:984.04px;font-size:11px;color:#000;">Start:</span>
<span class="t" style="right:1503.50px;top:984.04px;font-size:11px;color:#000;">0</span>
<span class="t" style="left:420.5px;top:984.04px;font-size:11px;color:#000;">End:</span>
<span class="t" style="right:1392.50px;top:984.04px;font-size:11px;color:#000;">500</span>
<div style="left:288.1px;top:998.6px;width:227.5px;height:1px;background:rgba(255,255,255,0.1)"></div>
<div style="left:521.4px;top:979.2px;width:88.9px;height:19.4px;background:linear-gradient(#a2a2a2,#b6b6b6);border:1px solid #191919;border-radius:10px;box-sizing:border-box"></div>
<svg style="left:527.5px;top:985.5px" width="5" height="8" viewBox="0 0 5 8"><path d="M4.5 0.5 L0.5 4 L4.5 7.5Z" fill="rgba(0,0,0,0.35)"/></svg>
<svg style="left:601px;top:985.5px" width="5" height="8" viewBox="0 0 5 8"><path d="M0.5 0.5 L4.5 4 L0.5 7.5Z" fill="rgba(0,0,0,0.35)"/></svg>
<span class="t" style="right:1298.00px;top:984.04px;font-size:11px;color:#000;">384</span>
<div style="left:627.4px;top:979.2px;width:20.800000000000068px;height:19.4px;background:linear-gradient(#a6a6a6,#8c8c8c);border:1px solid #111;border-radius:4px 0 0 4px;box-sizing:border-box;"></div>
<div style="left:647.2px;top:979.2px;width:20.799999999999955px;height:19.4px;background:linear-gradient(#a6a6a6,#8c8c8c);border:1px solid #111;border-radius:0;box-sizing:border-box;"></div>
<div style="left:667.0px;top:979.2px;width:20.899999999999977px;height:19.4px;background:linear-gradient(#a6a6a6,#8c8c8c);border:1px solid #111;border-radius:0;box-sizing:border-box;"></div>
<div style="left:686.9px;top:979.2px;width:20.800000000000068px;height:19.4px;background:linear-gradient(#a6a6a6,#8c8c8c);border:1px solid #111;border-radius:0;box-sizing:border-box;"></div>
<div style="left:706.7px;top:979.2px;width:20.899999999999977px;height:19.4px;background:linear-gradient(#a6a6a6,#8c8c8c);border:1px solid #111;border-radius:0;box-sizing:border-box;"></div>
<div style="left:726.6px;top:979.2px;width:19.799999999999955px;height:19.4px;background:linear-gradient(#a6a6a6,#8c8c8c);border:1px solid #111;border-radius:0 4px 4px 0;box-sizing:border-box;"></div>
<div style="left:627.4px;top:998.6px;width:119px;height:1px;background:rgba(255,255,255,0.1)"></div>
<svg style="left:630.4px;top:981.9000000000001px" width="14" height="14" viewBox="0 0 14 14"><rect x="1" y="2" width="2" height="10" fill="#fff" stroke="#000" stroke-width="1"/><path d="M8 2 L3.5 7 L8 12Z" fill="#fff" stroke="#000" stroke-width="1"/><path d="M13 2 L8.5 7 L13 12Z" fill="#fff" stroke="#000" stroke-width="1"/></svg>
<svg style="left:650.2px;top:981.9000000000001px" width="14" height="14" viewBox="0 0 14 14"><path d="M7 2 L1.5 7 L7 12Z" fill="#fff" stroke="#000" stroke-width="1"/><path d="M12.5 2 L7 7 L12.5 12Z" fill="#fff" stroke="#000" stroke-width="1"/></svg>
<svg style="left:670.0px;top:981.9000000000001px" width="14" height="14" viewBox="0 0 14 14"><path d="M11 1 L3 7 L11 13Z" fill="#fff" stroke="#000" stroke-width="1"/></svg>
<svg style="left:689.9px;top:981.9000000000001px" width="14" height="14" viewBox="0 0 14 14"><path d="M3 1 L11 7 L3 13Z" fill="#fff" stroke="#000" stroke-width="1"/></svg>
<svg style="left:709.7px;top:981.9000000000001px" width="14" height="14" viewBox="0 0 14 14"><path d="M1.5 2 L7 7 L1.5 12Z" fill="#fff" stroke="#000" stroke-width="1"/><path d="M7 2 L12.5 7 L7 12Z" fill="#fff" stroke="#000" stroke-width="1"/></svg>
<svg style="left:729.6px;top:981.9000000000001px" width="14" height="14" viewBox="0 0 14 14"><path d="M1 2 L5.5 7 L1 12Z" fill="#fff" stroke="#000" stroke-width="1"/><path d="M6 2 L10.5 7 L6 12Z" fill="#fff" stroke="#000" stroke-width="1"/><rect x="11" y="2" width="2" height="10" fill="#fff" stroke="#000" stroke-width="1"/></svg>
<div style="left:752.3px;top:979.2px;width:114.2px;height:19.4px;background:linear-gradient(#525252,#3a3a3a);border:1px solid #111;border-radius:4px;box-sizing:border-box;"></div>
<span class="t" style="left:760.5px;top:984.04px;font-size:11px;color:#fff;">No Sync</span>
<svg style="left:856px;top:981.7px" width="7" height="14" viewBox="0 0 7 14"><path d="M3.5 0.5 L6.5 5.5 L0.5 5.5Z M0.5 8.5 L6.5 8.5 L3.5 13.5Z" fill="rgba(255,255,255,0.55)"/></svg>
<div style="left:752.3px;top:998.6px;width:114.2px;height:1px;background:rgba(255,255,255,0.1)"></div>
<div style="left:883.3px;top:979.2px;width:19px;height:19.4px;background:linear-gradient(#a6a6a6,#8c8c8c);border:1px solid #111;border-radius:4px;box-sizing:border-box;"></div>
<svg style="left:887.5px;top:983.7px" width="11" height="11" viewBox="0 0 11 11"><circle cx="5.5" cy="5.5" r="4.5" fill="#e03010" stroke="#fff" stroke-width="1"/></svg>
<div style="left:908.3px;top:979.2px;width:31.4px;height:19.4px;background:linear-gradient(#525252,#3a3a3a);border:1px solid #111;border-radius:4px;box-sizing:border-box;"></div>
<svg style="left:913px;top:984.2px" width="10" height="10" viewBox="0 0 10 10"><path d="M5 0.5 L9.5 5 L5 9.5 L0.5 5Z" fill="#f0c020" stroke="#000" stroke-width="0.8"/></svg>
<svg style="left:929px;top:981.7px" width="7" height="14" viewBox="0 0 7 14"><path d="M3.5 0.5 L6.5 5.5 L0.5 5.5Z M0.5 8.5 L6.5 8.5 L3.5 13.5Z" fill="rgba(255,255,255,0.55)"/></svg>
<div style="left:945.6px;top:979.2px;width:129.7px;height:19.4px;background:linear-gradient(#9c9c9c,#aeaeae);border:1px solid #111;border-radius:4px 0 0 4px;box-sizing:border-box;border-right:none"></div>
<svg style="left:949px;top:981.7px" width="16" height="15" viewBox="0 0 16 15"><circle cx="3.5" cy="11" r="2.5" fill="none" stroke="#000" stroke-width="2.4"/><circle cx="3.5" cy="11" r="2.5" fill="none" stroke="#e8d890" stroke-width="1.2"/><path d="M3.5 8 V1 H6" stroke="#000" stroke-width="2.4" fill="none"/><path d="M3.5 8 V1.5 H6" stroke="#e8d890" stroke-width="1.1" fill="none"/><circle cx="8" cy="12" r="2.3" fill="none" stroke="#fff" stroke-width="1.3"/><path d="M9.5 10.5 L14 6" stroke="#fff" stroke-width="1.6"/></svg>
<div style="left:1075.3px;top:979.2px;width:20.2px;height:19.4px;background:linear-gradient(#a6a6a6,#8c8c8c);border:1px solid #111;border-radius:0;box-sizing:border-box;border-right:none;border-left:1px solid #222"></div>
<svg style="left:1078.5px;top:981.7px" width="14" height="14" viewBox="0 0 14 14"><circle cx="4" cy="10" r="2.5" fill="none" stroke="#000" stroke-width="2.4"/><circle cx="4" cy="10" r="2.5" fill="none" stroke="#fff" stroke-width="1.2"/><path d="M6 8 L12 2" stroke="#000" stroke-width="2.6"/><path d="M6 8 L12 2" stroke="#fff" stroke-width="1.2"/></svg>
<div style="left:1095.5px;top:979.2px;width:20.2px;height:19.4px;background:linear-gradient(#a6a6a6,#8c8c8c);border:1px solid #111;border-radius:0 4px 4px 0;box-sizing:border-box;border-left:1px solid #222"></div>
<svg style="left:1098.5px;top:981.7px" width="14" height="14" viewBox="0 0 14 14"><circle cx="4" cy="10" r="2.5" fill="none" stroke="#000" stroke-width="2.4"/><circle cx="4" cy="10" r="2.5" fill="none" stroke="#fff" stroke-width="1.2"/><path d="M6 8 L12 2" stroke="#000" stroke-width="2.6"/><path d="M6 8 L12 2" stroke="#fff" stroke-width="1.2"/><path d="M2 2 L13 13" stroke="#e02020" stroke-width="1.6"/></svg>
<div style="left:945.6px;top:998.6px;width:170.1px;height:1px;background:rgba(255,255,255,0.1)"></div>
<div style="left:1630.5px;top:28px;width:2px;height:975px;background:#000"></div>
<div style="left:1632.3px;top:29px;width:251.70000000000005px;height:168px;background:#727272"></div>
<div style="left:1632.3px;top:38px;width:251.70000000000005px;height:20px;background:#6f6f6f"></div>
<div style="left:1632.3px;top:58.0px;width:251.70000000000005px;height:20px;background:#777777"></div>
<svg style="left:1632.5px;top:61.5px" width="14" height="14" viewBox="0 0 14 14"><path d="M2 2.5 L12 2.5 L7 12Z" stroke="#000" stroke-width="3.2" fill="none" stroke-linejoin="round"/><path d="M2 2.5 L12 2.5 L7 12Z" stroke="#f0a040" stroke-width="1.5" fill="none" stroke-linejoin="round"/><circle cx="2" cy="2.5" r="1.3" fill="#fff"/><circle cx="12" cy="2.5" r="1.3" fill="#fff"/><circle cx="7" cy="12" r="1.3" fill="#fff"/></svg>
<span class="t" style="left:1650.5px;top:62.64px;font-size:11px;color:#000;letter-spacing:0.199px;">Dynami_Dic_06_200k_cut</span>
<div style="left:1793.2px;top:62.0px;width:1.8px;height:11px;background:#3a3a3a"></div>
<svg style="left:1810px;top:65.0px" width="14" height="7" viewBox="0 0 14 7"><defs><linearGradient id="ec" x1="0" x2="1"><stop offset="0" stop-color="#7a7a7a"/><stop offset="0.45" stop-color="#a0a0a0"/><stop offset="1" stop-color="#6a6a6a"/></linearGradient></defs><path d="M0.5 1 Q7 9.5 13.5 1 Q7 5 0.5 1Z" fill="url(#ec)" stroke="#5a5a5a" stroke-width="0.7"/></svg>
<svg style="left:1833.5px;top:61.0px" width="9" height="14" viewBox="0 0 9 14"><path d="M0.8 0.8 L0.8 10.5 L3.2 8.3 L5.2 13 L6.8 12.3 L4.9 7.8 L8.2 7.6Z" fill="#a6a6a6" stroke="#666" stroke-width="0.9" stroke-linejoin="round"/></svg>
<svg style="left:1849.5px;top:61.5px" width="14" height="13" viewBox="0 0 14 13"><rect x="0.8" y="2.3" width="12.4" height="10" rx="1" fill="#e8e8e8" stroke="#000" stroke-width="1.3"/><rect x="1.8" y="0.8" width="3" height="2" rx="0.8" fill="#eee" stroke="#000" stroke-width="0.9"/><rect x="1.8" y="5" width="1.6" height="6" fill="#222"/><rect x="10" y="3.3" width="2" height="1.2" fill="#222"/><rect x="11" y="5.5" width="1.2" height="5.5" fill="#333"/><circle cx="7" cy="8" r="3.2" fill="#ddd" stroke="#666" stroke-width="0.6"/><circle cx="7" cy="8.2" r="2.2" fill="#3a5a9a"/><path d="M7 8.2 L9.2 8.2 A2.2 2.2 0 0 1 7 10.4Z" fill="#a03a30"/><circle cx="3.6" cy="4" r="0.7" fill="#e01010"/></svg>
<div style="left:1632.3px;top:77.9px;width:251.70000000000005px;height:20px;background:#707070"></div>
<svg style="left:1632.5px;top:81.4px" width="14" height="14" viewBox="0 0 14 14"><path d="M2 2.5 L12 2.5 L7 12Z" stroke="#000" stroke-width="3.2" fill="none" stroke-linejoin="round"/><path d="M2 2.5 L12 2.5 L7 12Z" stroke="#f0a040" stroke-width="1.5" fill="none" stroke-linejoin="round"/><circle cx="2" cy="2.5" r="1.3" fill="#fff"/><circle cx="12" cy="2.5" r="1.3" fill="#fff"/><circle cx="7" cy="12" r="1.3" fill="#fff"/></svg>
<span class="t" style="left:1650.5px;top:82.55px;font-size:11px;color:#000;letter-spacing:0.204px;">Dynami_Feb_07_200k_cut</span>
<div style="left:1794.3px;top:81.9px;width:1.8px;height:11px;background:#3a3a3a"></div>
<svg style="left:1810px;top:84.9px" width="14" height="7" viewBox="0 0 14 7"><defs><linearGradient id="ec" x1="0" x2="1"><stop offset="0" stop-color="#7a7a7a"/><stop offset="0.45" stop-color="#a0a0a0"/><stop offset="1" stop-color="#6a6a6a"/></linearGradient></defs><path d="M0.5 1 Q7 9.5 13.5 1 Q7 5 0.5 1Z" fill="url(#ec)" stroke="#5a5a5a" stroke-width="0.7"/></svg>
<svg style="left:1833.5px;top:80.9px" width="9" height="14" viewBox="0 0 9 14"><path d="M0.8 0.8 L0.8 10.5 L3.2 8.3 L5.2 13 L6.8 12.3 L4.9 7.8 L8.2 7.6Z" fill="#a6a6a6" stroke="#666" stroke-width="0.9" stroke-linejoin="round"/></svg>
<svg style="left:1849.5px;top:81.4px" width="14" height="13" viewBox="0 0 14 13"><rect x="0.8" y="2.3" width="12.4" height="10" rx="1" fill="#e8e8e8" stroke="#000" stroke-width="1.3"/><rect x="1.8" y="0.8" width="3" height="2" rx="0.8" fill="#eee" stroke="#000" stroke-width="0.9"/><rect x="1.8" y="5" width="1.6" height="6" fill="#222"/><rect x="10" y="3.3" width="2" height="1.2" fill="#222"/><rect x="11" y="5.5" width="1.2" height="5.5" fill="#333"/><circle cx="7" cy="8" r="3.2" fill="#ddd" stroke="#666" stroke-width="0.6"/><circle cx="7" cy="8.2" r="2.2" fill="#3a5a9a"/><path d="M7 8.2 L9.2 8.2 A2.2 2.2 0 0 1 7 10.4Z" fill="#a03a30"/><circle cx="3.6" cy="4" r="0.7" fill="#e01010"/></svg>
<div style="left:1632.3px;top:97.8px;width:251.70000000000005px;height:20px;background:#777777"></div>
<svg style="left:1632.5px;top:101.3px" width="14" height="14" viewBox="0 0 14 14"><path d="M2 2.5 L12 2.5 L7 12Z" stroke="#000" stroke-width="3.2" fill="none" stroke-linejoin="round"/><path d="M2 2.5 L12 2.5 L7 12Z" stroke="#f0a040" stroke-width="1.5" fill="none" stroke-linejoin="round"/><circle cx="2" cy="2.5" r="1.3" fill="#fff"/><circle cx="12" cy="2.5" r="1.3" fill="#fff"/><circle cx="7" cy="12" r="1.3" fill="#fff"/></svg>
<span class="t" style="left:1650.5px;top:102.44px;font-size:11px;color:#fff;letter-spacing:0.202px;">Dynami_Jun_30_200k_cut</span>
<div style="left:1791.5px;top:101.8px;width:1.8px;height:11px;background:#3a3a3a"></div>
<svg style="left:1810px;top:103.6px" width="14" height="9" viewBox="0 0 14 9"><path d="M0.7 4.5 Q7 -1.5 13.3 4.5 Q7 10.5 0.7 4.5Z" fill="#fff" stroke="#111" stroke-width="1"/><circle cx="7" cy="4.5" r="2.6" fill="#111"/><circle cx="6.2" cy="3.6" r="0.9" fill="#fff"/></svg>
<svg style="left:1833.5px;top:100.8px" width="9" height="14" viewBox="0 0 9 14"><path d="M0.8 0.8 L0.8 10.5 L3.2 8.3 L5.2 13 L6.8 12.3 L4.9 7.8 L8.2 7.6Z" fill="#a6a6a6" stroke="#666" stroke-width="0.9" stroke-linejoin="round"/></svg>
<svg style="left:1849.5px;top:101.3px" width="14" height="13" viewBox="0 0 14 13"><rect x="0.8" y="2.3" width="12.4" height="10" rx="1" fill="#e8e8e8" stroke="#000" stroke-width="1.3"/><rect x="1.8" y="0.8" width="3" height="2" rx="0.8" fill="#eee" stroke="#000" stroke-width="0.9"/><rect x="1.8" y="5" width="1.6" height="6" fill="#222"/><rect x="10" y="3.3" width="2" height="1.2" fill="#222"/><rect x="11" y="5.5" width="1.2" height="5.5" fill="#333"/><circle cx="7" cy="8" r="3.2" fill="#ddd" stroke="#666" stroke-width="0.6"/><circle cx="7" cy="8.2" r="2.2" fill="#3a5a9a"/><path d="M7 8.2 L9.2 8.2 A2.2 2.2 0 0 1 7 10.4Z" fill="#a03a30"/><circle cx="3.6" cy="4" r="0.7" fill="#e01010"/></svg>
<div style="left:1632.3px;top:117.69999999999999px;width:251.70000000000005px;height:20px;background:#707070"></div>
<svg style="left:1632.5px;top:121.19999999999999px" width="14" height="14" viewBox="0 0 14 14"><path d="M2 2.5 L12 2.5 L7 12Z" stroke="#000" stroke-width="3.2" fill="none" stroke-linejoin="round"/><path d="M2 2.5 L12 2.5 L7 12Z" stroke="#f0a040" stroke-width="1.5" fill="none" stroke-linejoin="round"/><circle cx="2" cy="2.5" r="1.3" fill="#fff"/><circle cx="12" cy="2.5" r="1.3" fill="#fff"/><circle cx="7" cy="12" r="1.3" fill="#fff"/></svg>
<span class="t" style="left:1650.5px;top:122.34px;font-size:11px;color:#000;letter-spacing:0.204px;">Dynami_Marzo_2018_cut</span>
<div style="left:1788.4px;top:121.69999999999999px;width:1.8px;height:11px;background:#3a3a3a"></div>
<svg style="left:1810px;top:124.69999999999999px" width="14" height="7" viewBox="0 0 14 7"><defs><linearGradient id="ec" x1="0" x2="1"><stop offset="0" stop-color="#7a7a7a"/><stop offset="0.45" stop-color="#a0a0a0"/><stop offset="1" stop-color="#6a6a6a"/></linearGradient></defs><path d="M0.5 1 Q7 9.5 13.5 1 Q7 5 0.5 1Z" fill="url(#ec)" stroke="#5a5a5a" stroke-width="0.7"/></svg>
<svg style="left:1833.5px;top:120.69999999999999px" width="9" height="14" viewBox="0 0 9 14"><path d="M0.8 0.8 L0.8 10.5 L3.2 8.3 L5.2 13 L6.8 12.3 L4.9 7.8 L8.2 7.6Z" fill="#a6a6a6" stroke="#666" stroke-width="0.9" stroke-linejoin="round"/></svg>
<svg style="left:1849.5px;top:121.19999999999999px" width="14" height="13" viewBox="0 0 14 13"><rect x="0.8" y="2.3" width="12.4" height="10" rx="1" fill="#e8e8e8" stroke="#000" stroke-width="1.3"/><rect x="1.8" y="0.8" width="3" height="2" rx="0.8" fill="#eee" stroke="#000" stroke-width="0.9"/><rect x="1.8" y="5" width="1.6" height="6" fill="#222"/><rect x="10" y="3.3" width="2" height="1.2" fill="#222"/><rect x="11" y="5.5" width="1.2" height="5.5" fill="#333"/><circle cx="7" cy="8" r="3.2" fill="#ddd" stroke="#666" stroke-width="0.6"/><circle cx="7" cy="8.2" r="2.2" fill="#3a5a9a"/><path d="M7 8.2 L9.2 8.2 A2.2 2.2 0 0 1 7 10.4Z" fill="#a03a30"/><circle cx="3.6" cy="4" r="0.7" fill="#e01010"/></svg>
<div style="left:1632.3px;top:137.6px;width:251.70000000000005px;height:20px;background:#777777"></div>
<div style="left:1632.3px;top:137.6px;width:174.29999999999995px;height:20px;background:#7c8188"></div>
<svg style="left:1632.5px;top:141.1px" width="14" height="14" viewBox="0 0 14 14"><path d="M2 2.5 L12 2.5 L7 12Z" stroke="#000" stroke-width="3.2" fill="none" stroke-linejoin="round"/><path d="M2 2.5 L12 2.5 L7 12Z" stroke="#f0a040" stroke-width="1.5" fill="none" stroke-linejoin="round"/><circle cx="2" cy="2.5" r="1.3" fill="#fff"/><circle cx="12" cy="2.5" r="1.3" fill="#fff"/><circle cx="7" cy="12" r="1.3" fill="#fff"/></svg>
<span class="t" style="left:1650.5px;top:142.24px;font-size:11px;color:#000;letter-spacing:0.207px;">Dynami_Mayo31_18_cut</span>
<div style="left:1785.5px;top:141.6px;width:1.8px;height:11px;background:#3a3a3a"></div>
<svg style="left:1810px;top:144.6px" width="14" height="7" viewBox="0 0 14 7"><defs><linearGradient id="ec" x1="0" x2="1"><stop offset="0" stop-color="#7a7a7a"/><stop offset="0.45" stop-color="#a0a0a0"/><stop offset="1" stop-color="#6a6a6a"/></linearGradient></defs><path d="M0.5 1 Q7 9.5 13.5 1 Q7 5 0.5 1Z" fill="url(#ec)" stroke="#5a5a5a" stroke-width="0.7"/></svg>
<svg style="left:1833.5px;top:140.6px" width="9" height="14" viewBox="0 0 9 14"><path d="M0.8 0.8 L0.8 10.5 L3.2 8.3 L5.2 13 L6.8 12.3 L4.9 7.8 L8.2 7.6Z" fill="#a6a6a6" stroke="#666" stroke-width="0.9" stroke-linejoin="round"/></svg>
<svg style="left:1849.5px;top:141.1px" width="14" height="13" viewBox="0 0 14 13"><rect x="0.8" y="2.3" width="12.4" height="10" rx="1" fill="#e8e8e8" stroke="#000" stroke-width="1.3"/><rect x="1.8" y="0.8" width="3" height="2" rx="0.8" fill="#eee" stroke="#000" stroke-width="0.9"/><rect x="1.8" y="5" width="1.6" height="6" fill="#222"/><rect x="10" y="3.3" width="2" height="1.2" fill="#222"/><rect x="11" y="5.5" width="1.2" height="5.5" fill="#333"/><circle cx="7" cy="8" r="3.2" fill="#ddd" stroke="#666" stroke-width="0.6"/><circle cx="7" cy="8.2" r="2.2" fill="#3a5a9a"/><path d="M7 8.2 L9.2 8.2 A2.2 2.2 0 0 1 7 10.4Z" fill="#a03a30"/><circle cx="3.6" cy="4" r="0.7" fill="#e01010"/></svg>
<div style="left:1632.3px;top:157.5px;width:251.70000000000005px;height:20px;background:#707070"></div>
<svg style="left:1632.5px;top:161.0px" width="14" height="14" viewBox="0 0 14 14"><path d="M2 2.5 L12 2.5 L7 12Z" stroke="#000" stroke-width="3.2" fill="none" stroke-linejoin="round"/><path d="M2 2.5 L12 2.5 L7 12Z" stroke="#f0a040" stroke-width="1.5" fill="none" stroke-linejoin="round"/><circle cx="2" cy="2.5" r="1.3" fill="#fff"/><circle cx="12" cy="2.5" r="1.3" fill="#fff"/><circle cx="7" cy="12" r="1.3" fill="#fff"/></svg>
<span class="t" style="left:1650.5px;top:162.14px;font-size:11px;color:#000;letter-spacing:0.205px;">Dynami_Nov_22_200k_cut</span>
<div style="left:1796.5px;top:161.5px;width:1.8px;height:11px;background:#3a3a3a"></div>
<svg style="left:1810px;top:164.5px" width="14" height="7" viewBox="0 0 14 7"><defs><linearGradient id="ec" x1="0" x2="1"><stop offset="0" stop-color="#7a7a7a"/><stop offset="0.45" stop-color="#a0a0a0"/><stop offset="1" stop-color="#6a6a6a"/></linearGradient></defs><path d="M0.5 1 Q7 9.5 13.5 1 Q7 5 0.5 1Z" fill="url(#ec)" stroke="#5a5a5a" stroke-width="0.7"/></svg>
<svg style="left:1833.5px;top:160.5px" width="9" height="14" viewBox="0 0 9 14"><path d="M0.8 0.8 L0.8 10.5 L3.2 8.3 L5.2 13 L6.8 12.3 L4.9 7.8 L8.2 7.6Z" fill="#a6a6a6" stroke="#666" stroke-width="0.9" stroke-linejoin="round"/></svg>
<svg style="left:1849.5px;top:161.0px" width="14" height="13" viewBox="0 0 14 13"><rect x="0.8" y="2.3" width="12.4" height="10" rx="1" fill="#e8e8e8" stroke="#000" stroke-width="1.3"/><rect x="1.8" y="0.8" width="3" height="2" rx="0.8" fill="#eee" stroke="#000" stroke-width="0.9"/><rect x="1.8" y="5" width="1.6" height="6" fill="#222"/><rect x="10" y="3.3" width="2" height="1.2" fill="#222"/><rect x="11" y="5.5" width="1.2" height="5.5" fill="#333"/><circle cx="7" cy="8" r="3.2" fill="#ddd" stroke="#666" stroke-width="0.6"/><circle cx="7" cy="8.2" r="2.2" fill="#3a5a9a"/><path d="M7 8.2 L9.2 8.2 A2.2 2.2 0 0 1 7 10.4Z" fill="#a03a30"/><circle cx="3.6" cy="4" r="0.7" fill="#e01010"/></svg>
<svg style="left:1803px;top:101px" width="4" height="5" viewBox="0 0 4 5"><circle cx="2.2" cy="2.2" r="1.4" fill="#fff" stroke="#333" stroke-width="0.7"/></svg>
<svg style="left:1801px;top:120px" width="6" height="12" viewBox="0 0 6 12"><path d="M2 2.5 L5.5 10" stroke="#ddd" stroke-width="1"/><circle cx="2" cy="2.5" r="1.4" fill="#fff" stroke="#333" stroke-width="0.7"/></svg>
<svg style="left:1798px;top:140px" width="9" height="15" viewBox="0 0 9 15"><path d="M2 2.5 L8 7 M2 2.5 L6.5 13" stroke="#ddd" stroke-width="1"/><circle cx="2" cy="2.5" r="1.4" fill="#fff" stroke="#333" stroke-width="0.7"/><circle cx="6.5" cy="13" r="1.4" fill="#fff" stroke="#333" stroke-width="0.7"/></svg>
<div style="left:1806.6px;top:58px;width:1px;height:120px;background:#626262"></div>
<div style="left:1826.4px;top:58px;width:1px;height:120px;background:#626262"></div>
<div style="left:1846.4px;top:58px;width:1px;height:120px;background:#626262"></div>
<div style="left:1632.3px;top:178px;width:251.70000000000005px;height:19px;background:#727272"></div>
<div style="left:1632.3px;top:29px;width:251.70000000000005px;height:24px;background:#727272"></div>
<div style="left:1632.3px;top:53px;width:251.70000000000005px;height:1px;background:#8a8a8a"></div>
<div style="left:1632.3px;top:54px;width:251.70000000000005px;height:4px;background:#6f6f6f"></div>
<div style="left:1657px;top:54.5px;width:8px;height:1.2px;background:#222"></div>
<div style="left:1682px;top:54.5px;width:8px;height:1.2px;background:#222"></div>
<div style="left:1722px;top:54.5px;width:8px;height:1.2px;background:#222"></div>
<div style="left:1760px;top:54.5px;width:8px;height:1.2px;background:#222"></div>
<div style="left:1641.2px;top:31px;width:31.7px;height:19.6px;background:linear-gradient(#525252,#3a3a3a);border:1px solid #111;border-radius:4px;box-sizing:border-box"></div>
<svg style="left:1645px;top:33.5px" width="14" height="15" viewBox="0 0 14 15"><rect x="0.5" y="0.5" width="6" height="3" fill="#f0a030" stroke="#000" stroke-width="0.8"/><path d="M2 3.5 V12 M2 7 H6 M2 12 H6" stroke="#8aa0d0" stroke-width="0.9" fill="none"/><rect x="6" y="5.5" width="7" height="3" fill="#fff" stroke="#000" stroke-width="0.8"/><rect x="6" y="10.5" width="7" height="3" fill="#fff" stroke="#000" stroke-width="0.8"/></svg>
<svg style="left:1662.5px;top:34px" width="7" height="14" viewBox="0 0 7 14"><path d="M3.5 0.5 L6.5 5.5 L0.5 5.5Z M0.5 8.5 L6.5 8.5 L3.5 13.5Z" fill="rgba(255,255,255,0.55)"/></svg>
<span class="t" style="left:1685.2px;top:36.05px;font-size:11px;color:#000;">View</span>
<span class="t" style="left:1730.3px;top:36.05px;font-size:11px;color:#000;">Search</span>
<div style="left:1776.8px;top:31px;width:120px;height:19.6px;background:linear-gradient(#525252,#3a3a3a);border:1px solid #111;border-radius:4px;box-sizing:border-box"></div>
<span class="t" style="left:1785.2px;top:36.05px;font-size:11px;color:#fff;">All Scenes</span>
<svg style="left:1869.5px;top:29.5px" width="14" height="14" viewBox="0 0 14 14"><path d="M1 1 L13 13 M5 1 L13 9 M9 1 L13 5" stroke="#fff" stroke-width="1" opacity="0.75"/><path d="M2 1 L13 12 M6 1 L13 8 M10 1 L13 4" stroke="#000" stroke-width="1" opacity="0.55"/></svg>
<svg style="left:1633px;top:183px" width="14" height="14" viewBox="0 0 14 14"><path d="M1 1 L13 13 M1 5 L9 13 M1 9 L5 13" stroke="#fff" stroke-width="1" opacity="0.75"/><path d="M1 2 L12 13 M1 6 L8 13 M1 10 L4 13" stroke="#000" stroke-width="1" opacity="0.55"/></svg>
<div style="left:1867.7px;top:59.3px;width:11.5px;height:115px;background:#676767;border-radius:6px"></div>
<div style="left:1867.7px;top:124.7px;width:11.5px;height:49.6px;background:linear-gradient(90deg,#8c8c8c,#7c7c7c);border-radius:6px;border:1px solid #5a5a5a;box-sizing:border-box"></div>
<div style="left:1636.5px;top:180.1px;width:225.5px;height:12.2px;background:#676767;border-radius:6px"></div>
<div style="left:1667.7px;top:180.1px;width:164.8px;height:12.2px;background:linear-gradient(#8e8e8e,#7a7a7a);border-radius:6px;border:1px solid #5a5a5a;box-sizing:border-box"></div>
<div style="left:1632.3px;top:197px;width:251.70000000000005px;height:1.5px;background:#000"></div>
<div style="left:1632.3px;top:198.5px;width:251.70000000000005px;height:804px;background:#727272"></div>
<div style="left:1632.3px;top:223px;width:251.70000000000005px;height:1.5px;background:#808080"></div>
<div style="left:1641px;top:201px;width:31.8px;height:19.7px;background:linear-gradient(#525252,#3a3a3a);border:1px solid #111;border-radius:4px;box-sizing:border-box"></div>
<svg style="left:1645px;top:204px" width="14" height="14" viewBox="0 0 14 14"><rect x="0.5" y="0.5" width="13" height="5" rx="2" fill="#fff" stroke="#000" stroke-width="0.8"/><rect x="1.5" y="1.5" width="7" height="3" fill="#555"/><rect x="0.5" y="8" width="13" height="5" rx="2" fill="#fff" stroke="#000" stroke-width="0.8"/><path d="M3 10.5 L4.5 9 V12Z M11 10.5 L9.5 9 V12Z" fill="#000"/></svg>
<svg style="left:1662px;top:204px" width="7" height="14" viewBox="0 0 7 14"><path d="M3.5 0.5 L6.5 5.5 L0.5 5.5Z M0.5 8.5 L6.5 8.5 L3.5 13.5Z" fill="rgba(255,255,255,0.55)"/></svg>
<div style="left:1681.3px;top:201px;width:20.6px;height:19.7px;background:linear-gradient(#6a98e0,#4a78c0);border:1px solid #111;border-radius:4px 0 0 4px;box-sizing:border-box"></div>
<div style="left:1701.3999999999999px;top:201px;width:20.6px;height:19.7px;background:linear-gradient(#525252,#3a3a3a);border:1px solid #111;border-radius:0;box-sizing:border-box"></div>
<div style="left:1721.5px;top:201px;width:20.6px;height:19.7px;background:linear-gradient(#525252,#3a3a3a);border:1px solid #111;border-radius:0;box-sizing:border-box"></div>
<div style="left:1741.6px;top:201px;width:20.6px;height:19.7px;background:linear-gradient(#525252,#3a3a3a);border:1px solid #111;border-radius:0;box-sizing:border-box"></div>
<div style="left:1761.7px;top:201px;width:20.6px;height:19.7px;background:linear-gradient(#525252,#3a3a3a);border:1px solid #111;border-radius:0;box-sizing:border-box"></div>
<div style="left:1781.8px;top:201px;width:20.6px;height:19.7px;background:linear-gradient(#525252,#3a3a3a);border:1px solid #111;border-radius:0;box-sizing:border-box"></div>
<div style="left:1801.8999999999999px;top:201px;width:20.6px;height:19.7px;background:linear-gradient(#525252,#3a3a3a);border:1px solid #111;border-radius:0;box-sizing:border-box"></div>
<div style="left:1822.0px;top:201px;width:20.6px;height:19.7px;background:linear-gradient(#525252,#3a3a3a);border:1px solid #111;border-radius:0;box-sizing:border-box"></div>
<div style="left:1842.1px;top:201px;width:20.6px;height:19.7px;background:linear-gradient(#525252,#3a3a3a);border:1px solid #111;border-radius:0;box-sizing:border-box"></div>
<div style="left:1862.2px;top:201px;width:20.6px;height:19.7px;background:linear-gradient(#525252,#3a3a3a);border:1px solid #111;border-radius:0;box-sizing:border-box"></div>
<div style="left:1882.3px;top:201px;width:20.6px;height:19.7px;background:linear-gradient(#525252,#3a3a3a);border:1px solid #111;border-radius:0;box-sizing:border-box"></div>
<svg style="left:1684.5px;top:204.5px" width="14" height="13" viewBox="0 0 14 13"><rect x="0.8" y="2.3" width="12.4" height="10" rx="1" fill="#e8e8e8" stroke="#000" stroke-width="1.3"/><rect x="1.8" y="0.8" width="3" height="2" rx="0.8" fill="#eee" stroke="#000" stroke-width="0.9"/><rect x="1.8" y="5" width="1.6" height="6" fill="#222"/><rect x="10" y="3.3" width="2" height="1.2" fill="#222"/><rect x="11" y="5.5" width="1.2" height="5.5" fill="#333"/><circle cx="7" cy="8" r="3.2" fill="#ddd" stroke="#666" stroke-width="0.6"/><circle cx="7" cy="8.2" r="2.2" fill="#3a5a9a"/><path d="M7 8.2 L9.2 8.2 A2.2 2.2 0 0 1 7 10.4Z" fill="#a03a30"/><circle cx="3.6" cy="4" r="0.7" fill="#e01010"/></svg>
<svg style="left:1703.5px;top:204px" width="15" height="14" viewBox="0 0 15 14"><rect x="3" y="2" width="10" height="11" fill="#d8cca0" stroke="#333" stroke-width="0.8" transform="rotate(8 8 8)"/><rect x="1" y="1" width="10" height="10" fill="#ddd" stroke="#333" stroke-width="0.8"/><rect x="5" y="3" width="3" height="5" fill="#4a80d0"/><circle cx="4" cy="8" r="2" fill="#ccc" stroke="#333" stroke-width="0.7"/></svg>
<svg style="left:1723.5px;top:204px" width="15" height="14" viewBox="0 0 15 14"><circle cx="3" cy="3" r="2" fill="#e0e080" opacity="0.8"/><rect x="7" y="1" width="5" height="9" rx="2" fill="#5a8ad8" stroke="#234" stroke-width="0.7"/><circle cx="5.5" cy="10" r="3.5" fill="#bbb" stroke="#222" stroke-width="0.8"/></svg>
<svg style="left:1743.5px;top:204px" width="14" height="14" viewBox="0 0 14 14"><circle cx="7" cy="7" r="6" fill="#4a7ac0" stroke="#223" stroke-width="0.8"/><path d="M3 4 Q6 3 6 6 Q4 8 5 11 Q2 9 3 4Z M8 3 Q11 4 11 7 Q9 6 8 3Z M8 9 Q11 9 10 11 Q8 11 8 9Z" fill="#5a8040"/></svg>
<svg style="left:1763.5px;top:204px" width="14" height="14" viewBox="0 0 14 14"><path d="M7 1 L13 4 L13 10 L7 13 L1 10 L1 4Z" fill="#c89050" stroke="#333" stroke-width="0.8"/><path d="M1 4 L7 7 L13 4 M7 7 V13" stroke="#8a5a20" stroke-width="0.8" fill="none"/><path d="M1 4 L7 1 L13 4 L7 7Z" fill="#e8c090"/></svg>
<svg style="left:1783.5px;top:204px" width="14" height="14" viewBox="0 0 14 14"><path d="M3 9 L6 6 M8 8 L11 5" stroke="#000" stroke-width="0"/><rect x="1" y="6" width="7" height="4" rx="2" fill="none" stroke="#ddd" stroke-width="1.5" transform="rotate(-40 4.5 8)"/><rect x="6" y="3" width="7" height="4" rx="2" fill="none" stroke="#ddd" stroke-width="1.5" transform="rotate(-40 9.5 5)"/></svg>
<svg style="left:1803.5px;top:204px" width="14" height="14" viewBox="0 0 14 14"><path d="M2 12 L8 6" stroke="#4a80d0" stroke-width="2.5"/><circle cx="9.5" cy="4.5" r="3" fill="none" stroke="#4a80d0" stroke-width="2"/></svg>
<svg style="left:1823.5px;top:204px" width="14" height="14" viewBox="0 0 14 14"><path d="M2 3 L12 3 L7 12Z" stroke="#ddd" stroke-width="1" fill="none"/><circle cx="2" cy="3" r="1.2" fill="#fff"/><circle cx="12" cy="3" r="1.2" fill="#fff"/><circle cx="7" cy="12" r="1.2" fill="#fff"/></svg>
<svg style="left:1843.5px;top:204px" width="14" height="14" viewBox="0 0 14 14"><defs><radialGradient id="mt" cx="35%" cy="30%"><stop offset="0" stop-color="#eee"/><stop offset="1" stop-color="#666"/></radialGradient></defs><circle cx="7" cy="7" r="6" fill="url(#mt)"/><path d="M7 7 L13 7 A6 6 0 0 1 7 13Z" fill="#a07060" opacity="0.7"/></svg>
<svg style="left:1863.5px;top:204px" width="14" height="14" viewBox="0 0 14 14"><rect x="1" y="1" width="12" height="12" fill="#ddd" stroke="#333" stroke-width="0.6"/><path d="M2 2h3v3h-3z M8 2h3v3h-3z M5 5h3v3h-3z M2 8h3v3h-3z M8 8h3v3h-3z" fill="#a02020"/></svg>
<div style="left:1681.3px;top:221px;width:202px;height:1px;background:rgba(255,255,255,0.1)"></div>
<svg style="left:1869.5px;top:198.5px" width="14" height="14" viewBox="0 0 14 14"><path d="M1 1 L13 13 M5 1 L13 9 M9 1 L13 5" stroke="#fff" stroke-width="1" opacity="0.75"/><path d="M2 1 L13 12 M6 1 L13 8 M10 1 L13 4" stroke="#000" stroke-width="1" opacity="0.55"/></svg>
<div style="left:1867.3px;top:229px;width:12.9px;height:769px;background:#686868;border-radius:6px"></div>
<div style="left:1867.3px;top:590px;width:12.9px;height:334px;background:linear-gradient(90deg,#8a8a8a,#7a7a7a);border-radius:6px;border:1px solid #5c5c5c;box-sizing:border-box"></div>
<div style="left:1643px;top:233px;width:14px;height:14px;background:linear-gradient(#545454,#3c3c3c);border:1px solid #111;border-radius:3px;box-sizing:border-box;"></div>
<div style="left:1643px;top:247px;width:14px;height:1px;background:rgba(255,255,255,0.08)"></div>
<div style="left:0;top:0;"><svg style="left:1643px;top:230px;overflow:visible" width="14" height="17" viewBox="0 -3 14 17"><path d="M3.2 6.3 L6 9.3 L12.3 -0.6" stroke="#000" stroke-opacity="0.3" stroke-width="3" fill="none"/><path d="M3.2 6.3 L6 9.3 L12.3 -0.6" stroke="#d8d8d8" stroke-width="1.7" fill="none"/></svg></div>
<span class="t" style="left:1664.3px;top:235.04px;font-size:11px;color:#fff;">Compositing</span>
<div style="left:1752.9px;top:230.5px;width:105.6px;height:19.5px;background:linear-gradient(90deg,#8a8a8a 0,#8a8a8a 10px,transparent 10px),linear-gradient(#a2a2a2,#b6b6b6);border:1px solid #191919;border-radius:9.75px;box-sizing:border-box;"></div>
<div style="left:1756.9px;top:250.0px;width:97.6px;height:1px;background:rgba(255,255,255,0.1)"></div>
<span class="t" style="left:1766.9px;top:234.84px;font-size:11px;color:#000;">Dither:</span>
<span class="t" style="right:48.50px;top:234.84px;font-size:11px;color:#000;">0.000</span>
<div style="left:1643px;top:255px;width:14px;height:14px;background:linear-gradient(#545454,#3c3c3c);border:1px solid #111;border-radius:3px;box-sizing:border-box;"></div>
<div style="left:1643px;top:269px;width:14px;height:1px;background:rgba(255,255,255,0.08)"></div>
<div style="left:0;top:0;"><svg style="left:1643px;top:252px;overflow:visible" width="14" height="17" viewBox="0 -3 14 17"><path d="M3.2 6.3 L6 9.3 L12.3 -0.6" stroke="#000" stroke-opacity="0.3" stroke-width="3" fill="none"/><path d="M3.2 6.3 L6 9.3 L12.3 -0.6" stroke="#d8d8d8" stroke-width="1.7" fill="none"/></svg></div>
<span class="t" style="left:1664.3px;top:257.05px;font-size:11px;color:#fff;">Sequencer</span>
<div style="left:1643px;top:291.5px;width:14px;height:14px;background:linear-gradient(#545454,#3c3c3c);border:1px solid #111;border-radius:3px;box-sizing:border-box;"></div>
<div style="left:1643px;top:305.5px;width:14px;height:1px;background:rgba(255,255,255,0.08)"></div>
<span class="t" style="left:1664.3px;top:293.55px;font-size:11px;color:#000;">Fields</span>
<div style="left:1756px;top:291.5px;width:14px;height:14px;background:linear-gradient(#545454,#3c3c3c);border:1px solid #111;border-radius:3px;box-sizing:border-box;"></div>
<div style="left:1756px;top:305.5px;width:14px;height:1px;background:rgba(255,255,255,0.08)"></div>
<span class="t" style="left:1777.3px;top:293.55px;font-size:11px;color:#000;">Edge</span>
<div style="left:1640.4px;top:310.6px;width:51px;height:18.9px;background:linear-gradient(#6a98e0,#4a78c0);border:1px solid #111;border-radius:4px 0 0 4px;box-sizing:border-box;opacity:0.55"></div>
<div style="left:1691.4px;top:310.6px;width:53.4px;height:18.9px;background:linear-gradient(#525252,#3a3a3a);border:1px solid #111;border-radius:0 4px 4px 0;box-sizing:border-box;opacity:0.55"></div>
<span class="t" style="left:1642px;top:315.05px;font-size:11px;color:#3a5070;">Upper Fir</span>
<span class="t" style="left:1693px;top:315.05px;font-size:11px;color:#9a9a9a;">Lower Firs</span>
<div style="left:1752.9px;top:310.6px;width:105.6px;height:18.9px;background:linear-gradient(90deg,#8a8a8a 0,#8a8a8a 10px,transparent 10px),linear-gradient(#a2a2a2,#b6b6b6);border:1px solid #191919;border-radius:9.45px;box-sizing:border-box;opacity:0.55;"></div>
<div style="left:1756.9px;top:329.5px;width:97.6px;height:1px;background:rgba(255,255,255,0.1)"></div>
<span class="t" style="left:1766.9px;top:314.95px;font-size:11px;color:#505050;">Threshold:</span>
<span class="t" style="right:48.50px;top:314.95px;font-size:11px;color:#505050;">10</span>
<div style="left:1643px;top:335.5px;width:14px;height:14px;background:linear-gradient(#545454,#3c3c3c);border:1px solid #111;border-radius:3px;box-sizing:border-box;opacity:0.5;"></div>
<div style="left:1643px;top:349.5px;width:14px;height:1px;background:rgba(255,255,255,0.08)"></div>
<span class="t" style="left:1664.3px;top:337.55px;font-size:11px;color:#505050;">Still</span>
<div style="left:1752.9px;top:332.9px;width:105.6px;height:18.8px;background:#414141;border-radius:4px;opacity:0.9"></div>
<div style="left:1637px;top:360.3px;width:225px;height:1px;background:#5e5e5e"></div>
<div style="left:1637px;top:361.3px;width:225px;height:1px;background:rgba(255,255,255,0.08)"></div>
<svg style="left:1644.5px;top:368px" width="9" height="9" viewBox="0 0 9 9"><path d="M0.5 1 L8.5 1 L4.5 8.5Z" fill="#222"/></svg>
<span class="t" style="left:1655.8px;top:366.14px;font-size:12px;color:#000;letter-spacing:0.344px;">Metadata</span>
<div style="left:1846px;top:372px;width:1px;height:1px;background:#dedede"></div>
<div style="left:1846px;top:373px;width:1px;height:1px;background:#151515"></div>
<div style="left:1846px;top:375px;width:1px;height:1px;background:#dedede"></div>
<div style="left:1846px;top:376px;width:1px;height:1px;background:#151515"></div>
<div style="left:1849px;top:372px;width:1px;height:1px;background:#dedede"></div>
<div style="left:1849px;top:373px;width:1px;height:1px;background:#151515"></div>
<div style="left:1849px;top:375px;width:1px;height:1px;background:#dedede"></div>
<div style="left:1849px;top:376px;width:1px;height:1px;background:#151515"></div>
<div style="left:1852px;top:372px;width:1px;height:1px;background:#dedede"></div>
<div style="left:1852px;top:373px;width:1px;height:1px;background:#151515"></div>
<div style="left:1852px;top:375px;width:1px;height:1px;background:#dedede"></div>
<div style="left:1852px;top:376px;width:1px;height:1px;background:#151515"></div>
<div style="left:1855px;top:372px;width:1px;height:1px;background:#dedede"></div>
<div style="left:1855px;top:373px;width:1px;height:1px;background:#151515"></div>
<div style="left:1855px;top:375px;width:1px;height:1px;background:#dedede"></div>
<div style="left:1855px;top:376px;width:1px;height:1px;background:#151515"></div>
<div style="left:1643px;top:395.4px;width:14px;height:14px;background:linear-gradient(#545454,#3c3c3c);border:1px solid #111;border-radius:3px;box-sizing:border-box;"></div>
<div style="left:1643px;top:409.4px;width:14px;height:1px;background:rgba(255,255,255,0.08)"></div>
<span class="t" style="left:1664.3px;top:397.44px;font-size:11px;color:#000;">Stamp Output</span>
<div style="left:1640.4px;top:417.5px;width:104px;height:18.9px;background:linear-gradient(#a2a2a2,#b6b6b6);border:1px solid #191919;border-radius:9.45px;box-sizing:border-box;opacity:0.55;"></div>
<div style="left:1644.4px;top:436.4px;width:96px;height:1px;background:rgba(255,255,255,0.1)"></div>
<span class="t" style="left:1654.4px;top:421.85px;font-size:11px;color:#505050;">Font Size:</span>
<span class="t" style="right:162.60px;top:421.85px;font-size:11px;color:#505050;">12</span>
<svg style="left:1645.5px;top:423px" width="5" height="8" viewBox="0 0 5 8"><path d="M4.5 0.5 L0.5 4 L4.5 7.5Z" fill="rgba(0,0,0,0.25)"/></svg>
<svg style="left:1736px;top:423px" width="5" height="8" viewBox="0 0 5 8"><path d="M0.5 0.5 L4.5 4 L0.5 7.5Z" fill="rgba(0,0,0,0.25)"/></svg>
<div style="left:1756px;top:420px;width:14px;height:14px;background:linear-gradient(#545454,#3c3c3c);border:1px solid #111;border-radius:3px;box-sizing:border-box;opacity:0.5;"></div>
<div style="left:1756px;top:434px;width:14px;height:1px;background:rgba(255,255,255,0.08)"></div>
<div style="left:0;top:0;opacity:0.5;"><svg style="left:1756px;top:417px;overflow:visible" width="14" height="17" viewBox="0 -3 14 17"><path d="M3.2 6.3 L6 9.3 L12.3 -0.6" stroke="#000" stroke-opacity="0.3" stroke-width="3" fill="none"/><path d="M3.2 6.3 L6 9.3 L12.3 -0.6" stroke="#d8d8d8" stroke-width="1.7" fill="none"/></svg></div>
<span class="t" style="left:1777.3px;top:422.05px;font-size:11px;color:#c8c8c8;">Draw labels</span>
<span class="t" style="left:1647.3px;top:444.05px;font-size:11px;color:#555;">Text Color:</span>
<span class="t" style="left:1760.4px;top:444.05px;font-size:11px;color:#555;">Background:</span>
<div style="left:1640.4px;top:459.5px;width:104px;height:18.9px;background:#a9a9a9;border:1px solid #5a5a5a;border-radius:4px;box-sizing:border-box"></div>
<div style="left:1753.5px;top:459.5px;width:105px;height:18.9px;background:linear-gradient(90deg,#000 0,#000 52px,transparent 52px),repeating-conic-gradient(#999 0% 25%, #666 0% 50%) 0 0/16px 16px;border:1px solid #5a5a5a;border-radius:4px;box-sizing:border-box"></div>
<span class="t" style="left:1647.3px;top:489.55px;font-size:11px;color:#000;">Enabled Metadata</span>
<div style="left:1643px;top:512.7px;width:14px;height:14px;background:linear-gradient(#545454,#3c3c3c);border:1px solid #111;border-radius:3px;box-sizing:border-box;"></div>
<div style="left:1643px;top:526.7px;width:14px;height:1px;background:rgba(255,255,255,0.08)"></div>
<div style="left:0;top:0;"><svg style="left:1643px;top:509.70000000000005px;overflow:visible" width="14" height="17" viewBox="0 -3 14 17"><path d="M3.2 6.3 L6 9.3 L12.3 -0.6" stroke="#000" stroke-opacity="0.3" stroke-width="3" fill="none"/><path d="M3.2 6.3 L6 9.3 L12.3 -0.6" stroke="#d8d8d8" stroke-width="1.7" fill="none"/></svg></div>
<span class="t" style="left:1664.3px;top:514.75px;font-size:11px;color:#fff;">Time</span>
<div style="left:1756px;top:512.7px;width:14px;height:14px;background:linear-gradient(#545454,#3c3c3c);border:1px solid #111;border-radius:3px;box-sizing:border-box;"></div>
<div style="left:1756px;top:526.7px;width:14px;height:1px;background:rgba(255,255,255,0.08)"></div>
<div style="left:0;top:0;"><svg style="left:1756px;top:509.70000000000005px;overflow:visible" width="14" height="17" viewBox="0 -3 14 17"><path d="M3.2 6.3 L6 9.3 L12.3 -0.6" stroke="#000" stroke-opacity="0.3" stroke-width="3" fill="none"/><path d="M3.2 6.3 L6 9.3 L12.3 -0.6" stroke="#d8d8d8" stroke-width="1.7" fill="none"/></svg></div>
<span class="t" style="left:1777.3px;top:514.75px;font-size:11px;color:#fff;">Camera</span>
<div style="left:1643px;top:534.4px;width:14px;height:14px;background:linear-gradient(#545454,#3c3c3c);border:1px solid #111;border-radius:3px;box-sizing:border-box;"></div>
<div style="left:1643px;top:548.4px;width:14px;height:1px;background:rgba(255,255,255,0.08)"></div>
<div style="left:0;top:0;"><svg style="left:1643px;top:531.4px;overflow:visible" width="14" height="17" viewBox="0 -3 14 17"><path d="M3.2 6.3 L6 9.3 L12.3 -0.6" stroke="#000" stroke-opacity="0.3" stroke-width="3" fill="none"/><path d="M3.2 6.3 L6 9.3 L12.3 -0.6" stroke="#d8d8d8" stroke-width="1.7" fill="none"/></svg></div>
<span class="t" style="left:1664.3px;top:536.44px;font-size:11px;color:#fff;">Date</span>
<div style="left:1756px;top:534.4px;width:14px;height:14px;background:linear-gradient(#545454,#3c3c3c);border:1px solid #111;border-radius:3px;box-sizing:border-box;"></div>
<div style="left:1756px;top:548.4px;width:14px;height:1px;background:rgba(255,255,255,0.08)"></div>
<span class="t" style="left:1777.3px;top:536.44px;font-size:11px;color:#000;">Lens</span>
<div style="left:1643px;top:556.6px;width:14px;height:14px;background:linear-gradient(#545454,#3c3c3c);border:1px solid #111;border-radius:3px;box-sizing:border-box;"></div>
<div style="left:1643px;top:570.6px;width:14px;height:1px;background:rgba(255,255,255,0.08)"></div>
<div style="left:0;top:0;"><svg style="left:1643px;top:553.6px;overflow:visible" width="14" height="17" viewBox="0 -3 14 17"><path d="M3.2 6.3 L6 9.3 L12.3 -0.6" stroke="#000" stroke-opacity="0.3" stroke-width="3" fill="none"/><path d="M3.2 6.3 L6 9.3 L12.3 -0.6" stroke="#d8d8d8" stroke-width="1.7" fill="none"/></svg></div>
<span class="t" style="left:1664.3px;top:558.64px;font-size:11px;color:#fff;">RenderTime</span>
<div style="left:1756px;top:556.6px;width:14px;height:14px;background:linear-gradient(#545454,#3c3c3c);border:1px solid #111;border-radius:3px;box-sizing:border-box;"></div>
<div style="left:1756px;top:570.6px;width:14px;height:1px;background:rgba(255,255,255,0.08)"></div>
<div style="left:0;top:0;"><svg style="left:1756px;top:553.6px;overflow:visible" width="14" height="17" viewBox="0 -3 14 17"><path d="M3.2 6.3 L6 9.3 L12.3 -0.6" stroke="#000" stroke-opacity="0.3" stroke-width="3" fill="none"/><path d="M3.2 6.3 L6 9.3 L12.3 -0.6" stroke="#d8d8d8" stroke-width="1.7" fill="none"/></svg></div>
<span class="t" style="left:1777.3px;top:558.64px;font-size:11px;color:#fff;">Filename</span>
<div style="left:1643px;top:578.3px;width:14px;height:14px;background:linear-gradient(#545454,#3c3c3c);border:1px solid #111;border-radius:3px;box-sizing:border-box;"></div>
<div style="left:1643px;top:592.3px;width:14px;height:1px;background:rgba(255,255,255,0.08)"></div>
<div style="left:0;top:0;"><svg style="left:1643px;top:575.3px;overflow:visible" width="14" height="17" viewBox="0 -3 14 17"><path d="M3.2 6.3 L6 9.3 L12.3 -0.6" stroke="#000" stroke-opacity="0.3" stroke-width="3" fill="none"/><path d="M3.2 6.3 L6 9.3 L12.3 -0.6" stroke="#d8d8d8" stroke-width="1.7" fill="none"/></svg></div>
<span class="t" style="left:1664.3px;top:580.34px;font-size:11px;color:#fff;">Frame</span>
<div style="left:1756px;top:578.3px;width:14px;height:14px;background:linear-gradient(#545454,#3c3c3c);border:1px solid #111;border-radius:3px;box-sizing:border-box;"></div>
<div style="left:1756px;top:592.3px;width:14px;height:1px;background:rgba(255,255,255,0.08)"></div>
<span class="t" style="left:1777.3px;top:580.34px;font-size:11px;color:#000;">Marker</span>
<div style="left:1643px;top:600px;width:14px;height:14px;background:linear-gradient(#545454,#3c3c3c);border:1px solid #111;border-radius:3px;box-sizing:border-box;"></div>
<div style="left:1643px;top:614px;width:14px;height:1px;background:rgba(255,255,255,0.08)"></div>
<div style="left:0;top:0;"><svg style="left:1643px;top:597px;overflow:visible" width="14" height="17" viewBox="0 -3 14 17"><path d="M3.2 6.3 L6 9.3 L12.3 -0.6" stroke="#000" stroke-opacity="0.3" stroke-width="3" fill="none"/><path d="M3.2 6.3 L6 9.3 L12.3 -0.6" stroke="#d8d8d8" stroke-width="1.7" fill="none"/></svg></div>
<span class="t" style="left:1664.3px;top:602.04px;font-size:11px;color:#fff;">Scene</span>
<div style="left:1756px;top:600px;width:14px;height:14px;background:linear-gradient(#545454,#3c3c3c);border:1px solid #111;border-radius:3px;box-sizing:border-box;"></div>
<div style="left:1756px;top:614px;width:14px;height:1px;background:rgba(255,255,255,0.08)"></div>
<span class="t" style="left:1777.3px;top:602.04px;font-size:11px;color:#000;">Seq. Strip</span>
<div style="left:1643px;top:622.2px;width:14px;height:14px;background:linear-gradient(#545454,#3c3c3c);border:1px solid #111;border-radius:3px;box-sizing:border-box;"></div>
<div style="left:1643px;top:636.2px;width:14px;height:1px;background:rgba(255,255,255,0.08)"></div>
<span class="t" style="left:1664.3px;top:624.25px;font-size:11px;color:#000;">Memory</span>
<div style="left:1643px;top:647px;width:14px;height:14px;background:linear-gradient(#545454,#3c3c3c);border:1px solid #111;border-radius:3px;box-sizing:border-box;"></div>
<div style="left:1643px;top:661px;width:14px;height:1px;background:rgba(255,255,255,0.08)"></div>
<span class="t" style="left:1664.3px;top:649.04px;font-size:11px;color:#000;">No</span>
<div style="left:1690.1px;top:644.3px;width:168.4px;height:19.2px;background:linear-gradient(#8c8c8c,#939393);border:1px solid #555;border-radius:4px;box-sizing:border-box"></div>
<span class="t" style="left:1647.3px;top:674.54px;font-size:11px;color:#000;">Sequencer:</span>
<div style="left:1643px;top:697.4px;width:14px;height:14px;background:linear-gradient(#545454,#3c3c3c);border:1px solid #111;border-radius:3px;box-sizing:border-box;"></div>
<div style="left:1643px;top:711.4px;width:14px;height:1px;background:rgba(255,255,255,0.08)"></div>
<span class="t" style="left:1664.3px;top:699.44px;font-size:11px;color:#000;">Strip Metadata</span>
<div style="left:1637px;top:722.5px;width:225px;height:1px;background:#5e5e5e"></div>
<div style="left:1637px;top:723.5px;width:225px;height:1px;background:rgba(255,255,255,0.08)"></div>
<svg style="left:1644.5px;top:730px" width="9" height="9" viewBox="0 0 9 9"><path d="M0.5 1 L8.5 1 L4.5 8.5Z" fill="#222"/></svg>
<span class="t" style="left:1655.8px;top:728.14px;font-size:12px;color:#000;letter-spacing:0.328px;">Output</span>
<div style="left:1846px;top:734px;width:1px;height:1px;background:#dedede"></div>
<div style="left:1846px;top:735px;width:1px;height:1px;background:#151515"></div>
<div style="left:1846px;top:737px;width:1px;height:1px;background:#dedede"></div>
<div style="left:1846px;top:738px;width:1px;height:1px;background:#151515"></div>
<div style="left:1849px;top:734px;width:1px;height:1px;background:#dedede"></div>
<div style="left:1849px;top:735px;width:1px;height:1px;background:#151515"></div>
<div style="left:1849px;top:737px;width:1px;height:1px;background:#dedede"></div>
<div style="left:1849px;top:738px;width:1px;height:1px;background:#151515"></div>
<div style="left:1852px;top:734px;width:1px;height:1px;background:#dedede"></div>
<div style="left:1852px;top:735px;width:1px;height:1px;background:#151515"></div>
<div style="left:1852px;top:737px;width:1px;height:1px;background:#dedede"></div>
<div style="left:1852px;top:738px;width:1px;height:1px;background:#151515"></div>
<div style="left:1855px;top:734px;width:1px;height:1px;background:#dedede"></div>
<div style="left:1855px;top:735px;width:1px;height:1px;background:#151515"></div>
<div style="left:1855px;top:737px;width:1px;height:1px;background:#dedede"></div>
<div style="left:1855px;top:738px;width:1px;height:1px;background:#151515"></div>
<div style="left:1640.4px;top:754.5px;width:198px;height:19.2px;background:linear-gradient(#9c9c9c,#aeaeae);border:1px solid #191919;border-right:none;border-radius:4px 0 0 4px;box-sizing:border-box"></div>
<div style="left:1838.3px;top:754.5px;width:20.2px;height:19.2px;background:linear-gradient(#a6a6a6,#8c8c8c);border:1px solid #191919;border-radius:0 4px 4px 0;box-sizing:border-box"></div>
<svg style="left:1840.5px;top:757px" width="16" height="14" viewBox="0 0 16 14"><path d="M1 3 H6 L7.5 4.5 H14 V13 H1Z" fill="#d8c88a" stroke="#000" stroke-width="1"/><rect x="8" y="1" width="6" height="4" fill="#fff" stroke="#000" stroke-width="0.8"/><path d="M1 6.5 H15 L14 13 H1Z" fill="#efe2a8" stroke="#000" stroke-width="0.8"/></svg>
<span class="t" style="left:1647.3px;top:759.04px;font-size:11px;color:#000;letter-spacing:0.377px;">E:\Frames blender...-780_####.png</span>
<div style="left:1640.4px;top:773.7px;width:218px;height:1px;background:rgba(255,255,255,0.1)"></div>
<div style="left:1643px;top:782.8px;width:14px;height:14px;background:linear-gradient(#545454,#3c3c3c);border:1px solid #111;border-radius:3px;box-sizing:border-box;"></div>
<div style="left:1643px;top:796.8px;width:14px;height:1px;background:rgba(255,255,255,0.08)"></div>
<div style="left:0;top:0;"><svg style="left:1643px;top:779.8px;overflow:visible" width="14" height="17" viewBox="0 -3 14 17"><path d="M3.2 6.3 L6 9.3 L12.3 -0.6" stroke="#000" stroke-opacity="0.3" stroke-width="3" fill="none"/><path d="M3.2 6.3 L6 9.3 L12.3 -0.6" stroke="#d8d8d8" stroke-width="1.7" fill="none"/></svg></div>
<span class="t" style="left:1664.3px;top:784.84px;font-size:11px;color:#fff;">Overwrite</span>
<div style="left:1756px;top:782.8px;width:14px;height:14px;background:linear-gradient(#545454,#3c3c3c);border:1px solid #111;border-radius:3px;box-sizing:border-box;"></div>
<div style="left:1756px;top:796.8px;width:14px;height:1px;background:rgba(255,255,255,0.08)"></div>
<div style="left:0;top:0;"><svg style="left:1756px;top:779.8px;overflow:visible" width="14" height="17" viewBox="0 -3 14 17"><path d="M3.2 6.3 L6 9.3 L12.3 -0.6" stroke="#000" stroke-opacity="0.3" stroke-width="3" fill="none"/><path d="M3.2 6.3 L6 9.3 L12.3 -0.6" stroke="#d8d8d8" stroke-width="1.7" fill="none"/></svg></div>
<span class="t" style="left:1777.3px;top:784.84px;font-size:11px;color:#fff;">File Extensions</span>
<div style="left:1643px;top:804.5px;width:14px;height:14px;background:linear-gradient(#545454,#3c3c3c);border:1px solid #111;border-radius:3px;box-sizing:border-box;"></div>
<div style="left:1643px;top:818.5px;width:14px;height:1px;background:rgba(255,255,255,0.08)"></div>
<span class="t" style="left:1664.3px;top:806.54px;font-size:11px;color:#000;">Placeholders</span>
<div style="left:1756px;top:804.5px;width:14px;height:14px;background:linear-gradient(#545454,#3c3c3c);border:1px solid #111;border-radius:3px;box-sizing:border-box;"></div>
<div style="left:1756px;top:818.5px;width:14px;height:1px;background:rgba(255,255,255,0.08)"></div>
<span class="t" style="left:1777.3px;top:806.54px;font-size:11px;color:#000;">Cache Result</span>
<div style="left:1640.4px;top:826.5px;width:104.4px;height:19px;background:linear-gradient(#525252,#3a3a3a);border:1px solid #111;border-radius:4px;box-sizing:border-box"></div>
<svg style="left:1645px;top:828.5px" width="14" height="16" viewBox="0 0 14 16"><path d="M1.5 0.5 H9 L12.5 4 V15.5 H1.5Z" fill="#fff" stroke="#000" stroke-width="1"/><rect x="3" y="3" width="8" height="5" fill="#e8a0a0"/><rect x="3" y="8" width="8" height="1.5" fill="#222"/><rect x="3" y="9.5" width="8" height="4" fill="#8f8fd8"/><rect x="8" y="4" width="2" height="2" fill="#fff"/></svg>
<span class="t" style="left:1663px;top:831.04px;font-size:11px;color:#fff;">PNG</span>
<svg style="left:1735px;top:829.5px" width="7" height="14" viewBox="0 0 7 14"><path d="M3.5 0.5 L6.5 5.5 L0.5 5.5Z M0.5 8.5 L6.5 8.5 L3.5 13.5Z" fill="rgba(255,255,255,0.55)"/></svg>
<div style="left:1753.5px;top:826.5px;width:34px;height:19px;background:linear-gradient(#525252,#3a3a3a);border:1px solid #111;border-right:none;border-radius:4px 0 0 4px;box-sizing:border-box"></div>
<div style="left:1787.4px;top:826.5px;width:35.2px;height:19px;background:linear-gradient(#525252,#3a3a3a);border:1px solid #111;border-left:1px solid #222;border-right:none;box-sizing:border-box"></div>
<div style="left:1822.6px;top:826.5px;width:35.9px;height:19px;background:linear-gradient(#6a98e0,#4a78c0);border:1px solid #111;border-radius:0 4px 4px 0;box-sizing:border-box"></div>
<span class="t" style="left:1770.5px;top:831.04px;font-size:11px;color:#fff;transform:translateX(-50%);">BW</span>
<span class="t" style="left:1805px;top:831.04px;font-size:11px;color:#fff;transform:translateX(-50%);">RGB</span>
<span class="t" style="left:1840.5px;top:831.04px;font-size:11px;color:#000;transform:translateX(-50%);">RGBA</span>
<div style="left:1640.4px;top:845.5px;width:218px;height:1px;background:rgba(255,255,255,0.1)"></div>
<span class="t" style="left:1647.3px;top:853.54px;font-size:11px;color:#000;">Color Depth:</span>
<div style="left:1718.4px;top:848.7px;width:69px;height:19px;background:linear-gradient(#6a98e0,#4a78c0);border:1px solid #111;border-right:none;border-radius:4px 0 0 4px;box-sizing:border-box"></div>
<div style="left:1787.4px;top:848.7px;width:71.1px;height:19px;background:linear-gradient(#525252,#3a3a3a);border:1px solid #111;border-left:1px solid #222;border-radius:0 4px 4px 0;box-sizing:border-box"></div>
<span class="t" style="left:1752.5px;top:853.54px;font-size:11px;color:#000;transform:translateX(-50%);">8</span>
<span class="t" style="left:1822.5px;top:853.54px;font-size:11px;color:#fff;transform:translateX(-50%);">16</span>
<div style="left:1640.4px;top:870.8px;width:218.1px;height:18.8px;background:linear-gradient(90deg,#8a8a8a 0,#8a8a8a 39.6px,transparent 39.6px),linear-gradient(#a2a2a2,#b6b6b6);border:1px solid #191919;border-radius:9.4px;box-sizing:border-box;"></div>
<div style="left:1644.4px;top:889.5999999999999px;width:210.1px;height:1px;background:rgba(255,255,255,0.1)"></div>
<span class="t" style="left:1654.4px;top:875.14px;font-size:11px;color:#000;">Compression:</span>
<span class="t" style="right:48.50px;top:875.14px;font-size:11px;color:#000;">15%</span>
<div style="left:1637px;top:900.8px;width:225px;height:1px;background:#5e5e5e"></div>
<div style="left:1637px;top:901.8px;width:225px;height:1px;background:rgba(255,255,255,0.08)"></div>
<svg style="left:1644.5px;top:908px" width="9" height="9" viewBox="0 0 9 9"><path d="M0.5 1 L8.5 1 L4.5 8.5Z" fill="#222"/></svg>
<span class="t" style="left:1655.8px;top:906.14px;font-size:12px;color:#000;letter-spacing:-0.015px;">Bake</span>
<div style="left:1846px;top:912px;width:1px;height:1px;background:#dedede"></div>
<div style="left:1846px;top:913px;width:1px;height:1px;background:#151515"></div>
<div style="left:1846px;top:915px;width:1px;height:1px;background:#dedede"></div>
<div style="left:1846px;top:916px;width:1px;height:1px;background:#151515"></div>
<div style="left:1849px;top:912px;width:1px;height:1px;background:#dedede"></div>
<div style="left:1849px;top:913px;width:1px;height:1px;background:#151515"></div>
<div style="left:1849px;top:915px;width:1px;height:1px;background:#dedede"></div>
<div style="left:1849px;top:916px;width:1px;height:1px;background:#151515"></div>
<div style="left:1852px;top:912px;width:1px;height:1px;background:#dedede"></div>
<div style="left:1852px;top:913px;width:1px;height:1px;background:#151515"></div>
<div style="left:1852px;top:915px;width:1px;height:1px;background:#dedede"></div>
<div style="left:1852px;top:916px;width:1px;height:1px;background:#151515"></div>
<div style="left:1855px;top:912px;width:1px;height:1px;background:#dedede"></div>
<div style="left:1855px;top:913px;width:1px;height:1px;background:#151515"></div>
<div style="left:1855px;top:915px;width:1px;height:1px;background:#dedede"></div>
<div style="left:1855px;top:916px;width:1px;height:1px;background:#151515"></div>
<div style="left:1640.1px;top:932.5px;width:218.5px;height:19.4px;background:linear-gradient(#a6a6a6,#8c8c8c);border:1px solid #191919;border-radius:4px;box-sizing:border-box"></div>
<svg style="left:1643.5px;top:935.5px" width="14" height="13" viewBox="0 0 14 13"><rect x="0.8" y="2.3" width="12.4" height="10" rx="1" fill="#e8e8e8" stroke="#000" stroke-width="1.3"/><rect x="1.8" y="0.8" width="3" height="2" rx="0.8" fill="#eee" stroke="#000" stroke-width="0.9"/><rect x="1.8" y="5" width="1.6" height="6" fill="#222"/><rect x="10" y="3.3" width="2" height="1.2" fill="#222"/><rect x="11" y="5.5" width="1.2" height="5.5" fill="#333"/><circle cx="7" cy="8" r="3.2" fill="#ddd" stroke="#666" stroke-width="0.6"/><circle cx="7" cy="8.2" r="2.2" fill="#3a5a9a"/><path d="M7 8.2 L9.2 8.2 A2.2 2.2 0 0 1 7 10.4Z" fill="#a03a30"/><circle cx="3.6" cy="4" r="0.7" fill="#e01010"/></svg>
<svg style="left:1653px;top:933px" width="7" height="7" viewBox="0 0 7 7"><path d="M3.5 0 V7 M0 3.5 H7" stroke="#ffe060" stroke-width="1.6"/></svg>
<span class="t" style="left:1756.5px;top:937.04px;font-size:11px;color:#000;transform:translateX(-50%);">Bake</span>
<div style="left:1640.1px;top:951.9px;width:218.5px;height:1px;background:rgba(255,255,255,0.1)"></div>
<span class="t" style="left:1647.3px;top:962.04px;font-size:11px;color:#000;">Bake Mode:</span>
<div style="left:1717px;top:957.6px;width:141.6px;height:19px;background:linear-gradient(#525252,#3a3a3a);border:1px solid #111;border-radius:4px;box-sizing:border-box"></div>
<span class="t" style="left:1724.5px;top:962.04px;font-size:11px;color:#fff;">Full Render</span>
<svg style="left:1849px;top:960.5px" width="7" height="14" viewBox="0 0 7 14"><path d="M3.5 0.5 L6.5 5.5 L0.5 5.5Z M0.5 8.5 L6.5 8.5 L3.5 13.5Z" fill="rgba(255,255,255,0.55)"/></svg>
<div style="left:1643px;top:995.7px;width:14px;height:8px;background:linear-gradient(#545454,#3c3c3c);border:1px solid #111;border-radius:3px;box-sizing:border-box"></div>
<div style="left:1756px;top:995.7px;width:14px;height:8px;background:linear-gradient(#545454,#3c3c3c);border:1px solid #111;border-radius:3px;box-sizing:border-box"></div>
<span class="t" style="left:1664px;top:997.54px;font-size:11px;color:#000;">Bake to Vertex Color</span>
<span class="t" style="left:1777px;top:997.54px;font-size:11px;color:#000;">Selected to Active</span>
<svg style="left:1633px;top:988px" width="14" height="14" viewBox="0 0 14 14"><path d="M1 1 L13 13 M1 5 L9 13 M1 9 L5 13" stroke="#fff" stroke-width="1" opacity="0.75"/><path d="M1 2 L12 13 M1 6 L8 13 M1 10 L4 13" stroke="#000" stroke-width="1" opacity="0.55"/></svg>
<div style="left:1884px;top:0px;width:1.4px;height:1008px;background:#1e88e5"></div>
<div style="left:1885.4px;top:0px;width:6.6px;height:1008px;background:linear-gradient(#02162f,#03203f 50%,#021a36)"></div>
<div style="left:0px;top:1001.4px;width:1884px;height:1.3px;background:#1e88e5"></div>
<div style="left:0px;top:1002.7px;width:1892px;height:5.3px;background:#2a2b2d"></div>
<div style="left:0px;top:1002.7px;width:262.2px;height:5.3px;background:#071a33"></div>
<div style="left:262.2px;top:1002.7px;width:157.3px;height:5.3px;background:#e6e6e6"></div>
<div style="left:283px;top:1003px;width:14.7px;height:5px;background:#111;border-radius:2px"></div>
<div style="left:285px;top:1004px;width:10px;height:2px;background:#2a9a3a"></div>
<span class="t" style="left:311.7px;top:1002.24px;font-size:13px;color:#3d6fb0;">Corporate_brochur</span>
<div style="left:1543px;top:1002.7px;width:102px;height:5.3px;background:#000;border-radius:0 0 12px 12px"></div>
<div style="left:1683px;top:1002.7px;width:181px;height:5.3px;background:#e6e6e6"></div>
<div style="left:1723.7px;top:1002.7px;width:1px;height:5.3px;background:#aaa"></div>
<div style="left:1827.3px;top:1002.7px;width:1px;height:5.3px;background:#aaa"></div>
<div style="left:1864px;top:1002.7px;width:28px;height:5.3px;background:#0a2a50"></div>
<div style="left:506px;top:1003px;width:3px;height:1.2px;background:#8aa8d0"></div>
<div style="left:556px;top:1003px;width:3px;height:1.2px;background:#8aa8d0"></div>
<div style="left:583px;top:1003px;width:3px;height:1.2px;background:#8aa8d0"></div>
<div style="left:601px;top:1003px;width:3px;height:1.2px;background:#8aa8d0"></div>
<div style="left:771px;top:1003px;width:3px;height:1.2px;background:#8aa8d0"></div>
<div style="left:821px;top:1003px;width:3px;height:1.2px;background:#8aa8d0"></div>
<div style="left:848px;top:1003px;width:3px;height:1.2px;background:#8aa8d0"></div>
<div style="left:866px;top:1003px;width:3px;height:1.2px;background:#8aa8d0"></div>
<div style="left:965px;top:1003px;width:3px;height:1.2px;background:#8aa8d0"></div>
<div style="left:1015px;top:1003px;width:3px;height:1.2px;background:#8aa8d0"></div>
<div style="left:1042px;top:1003px;width:3px;height:1.2px;background:#8aa8d0"></div>
<div style="left:1060px;top:1003px;width:3px;height:1.2px;background:#8aa8d0"></div>
</body></html>
